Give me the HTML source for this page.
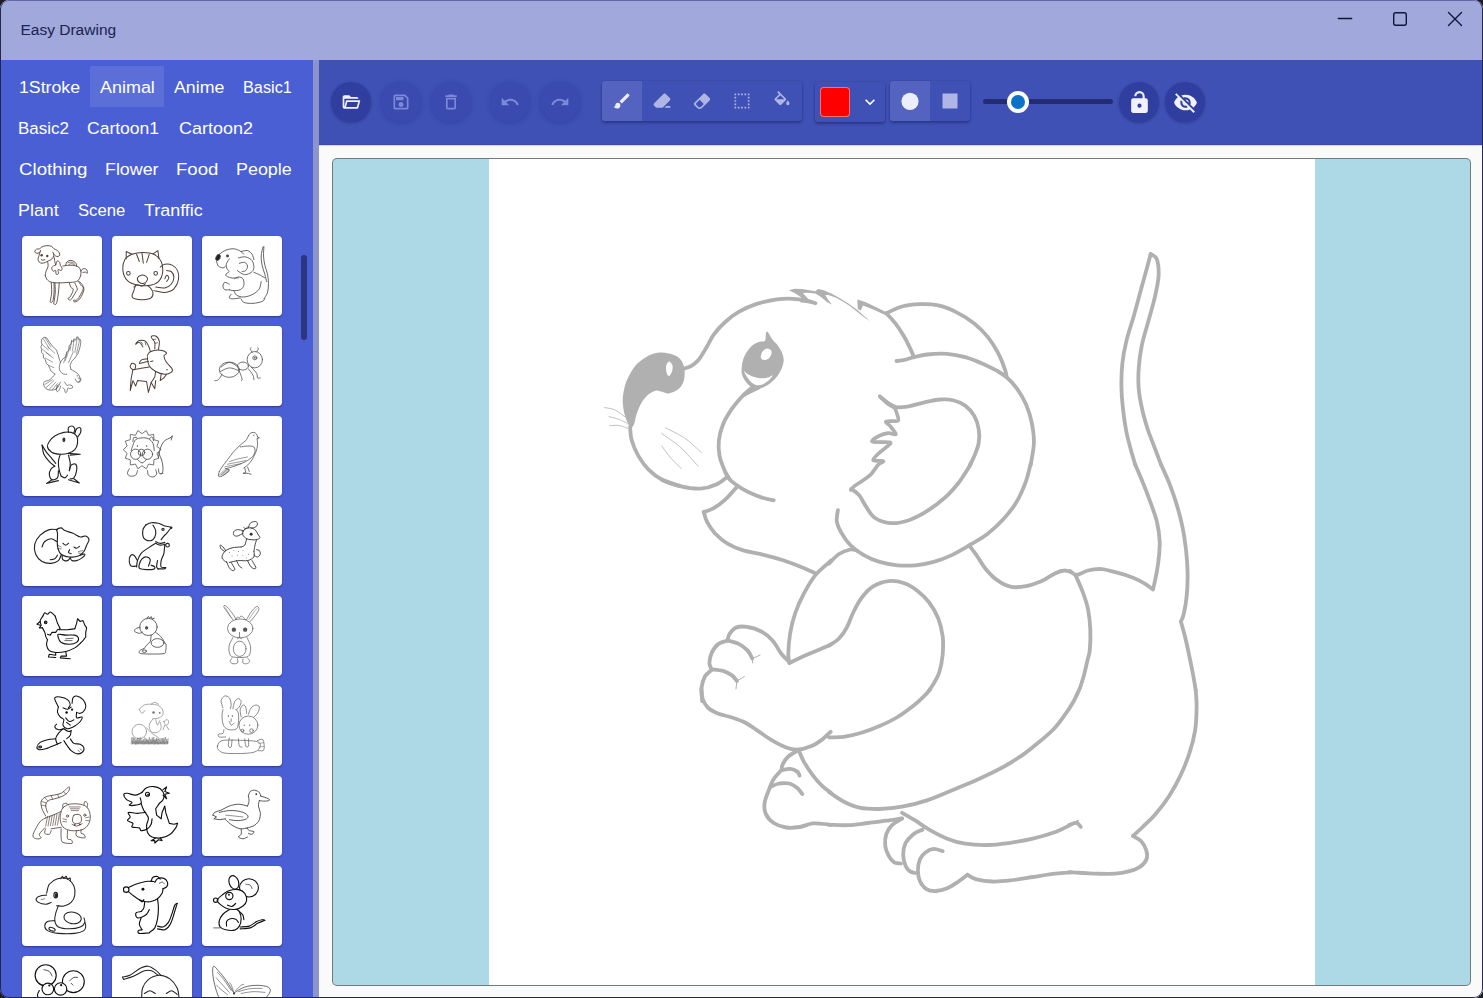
<!DOCTYPE html>
<html>
<head>
<meta charset="utf-8">
<title>Easy Drawing</title>
<style>
*{box-sizing:border-box;margin:0;padding:0}
html,body{width:1483px;height:998px;overflow:hidden;background:#1c1c24;font-family:"Liberation Sans",sans-serif}
#win{position:absolute;left:0;top:0;width:1483px;height:998px;overflow:hidden;border-radius:9px 9px 9px 9px;background:#a0a8dc}
#win .edge{position:absolute;left:0;top:0;right:0;bottom:0;border-radius:9px;border:1px solid #23264d;border-top-color:#6866ab;z-index:50;pointer-events:none}
.abs{position:absolute}
#title{left:0;top:0;width:1483px;height:60px;background:#a0a8dc}
#title .t{position:absolute;left:20px;top:20px;transform:translate(0.5px,0.5px);font-size:15.5px;line-height:18px;color:#1b2250;white-space:nowrap;transform-origin:0 50%}
#side{left:0;top:60px;width:313px;height:938px;background:#4a5fd4;overflow:hidden}
#split{left:313px;top:60px;width:6px;height:938px;background:#8b94cc}
#tool{left:319px;top:60px;width:1164px;height:85px;background:#3f51b5;box-shadow:0 1px 1px rgba(0,0,0,.12);border-bottom:1px solid #3a4aa8}
#work{left:319px;top:145px;width:1164px;height:853px;background:#fafafa}
#cont{left:332px;top:158px;width:1139px;height:828px;background:#add8e6;border:1px solid rgba(84,84,84,.7);border-radius:5px;overflow:hidden}
#paper{left:489px;top:159px;width:826px;height:826px;background:#fff}
.tab{position:absolute;height:41px;line-height:41px;font-size:17.4px;color:#fff;white-space:nowrap}
.tab span{display:inline-block;transform-origin:0 50%}
.sel{background:rgba(255,255,255,.10)}
.th{position:absolute;width:80px;height:80px;background:#fff;border-radius:4px;box-shadow:0 1px 2px rgba(0,0,60,.42);overflow:hidden}
.th svg{position:absolute;left:0;top:0;width:80px;height:80px;fill:none;stroke:#444;stroke-width:1.1;stroke-linecap:round;stroke-linejoin:round}
#sb{left:301px;top:255px;width:6px;height:85px;border-radius:3px;background:#2a367f}
.cb{position:absolute;width:40px;height:40px;border-radius:20px;background:#303f9f;box-shadow:0 1px 3px rgba(0,0,60,.28)}
.cb.dis{background:#3a4aae;box-shadow:0 1px 5px rgba(30,40,140,.35)}
.cb svg{position:absolute;left:10px;top:10.4px;width:20px;height:20px;fill:#f0f1fb}
.cb.dis svg{fill:#7e88d8}
.card{position:absolute;height:40px;background:#3f51b5;border-radius:3px;box-shadow:0 2px 3px rgba(0,0,50,.3),0 0 2px rgba(0,0,50,.2)}
.it{position:absolute;top:0;width:40px;height:40px}
.it.on{background:#5463c0}
.it svg{position:absolute;left:10px;top:10px;width:20px;height:20px;fill:#afb6e6}
.it.on svg{fill:#eceefa}
</style>
</head>
<body>
<div id="win">
<div id="title" class="abs"><div class="t">Easy Drawing</div>
<svg class="abs" style="left:1330px;top:5px" width="150" height="30" viewBox="0 0 150 30" fill="none" stroke="#10163a" stroke-width="1.4" stroke-linecap="round">
<path d="M8.3 13.5H21.7"/>
<rect x="63.7" y="7.7" width="12.6" height="12.6" rx="2"/>
<path d="M118.5 7.5L131.5 20.5M131.5 7.5L118.5 20.5"/>
</svg>
</div>
<div id="side" class="abs">
<div class="tab" style="left:18.66px;top:7px"><span style="transform:scaleX(1.0182)">1Stroke</span></div>
<div class="abs sel" style="left:90px;top:6px;width:74px;height:41px"></div>
<div class="tab" style="left:99.63px;top:7px"><span style="transform:scaleX(1.0319)">Animal</span></div>
<div class="tab" style="left:174.06px;top:7px"><span style="transform:scaleX(1.0205)">Anime</span></div>
<div class="tab" style="left:242.52px;top:7px"><span style="transform:scaleX(0.9355)">Basic1</span></div>
<div class="tab" style="left:18.36px;top:48px"><span style="transform:scaleX(0.9745)">Basic2</span></div>
<div class="tab" style="left:87.41px;top:48px"><span style="transform:scaleX(1.0076)">Cartoon1</span></div>
<div class="tab" style="left:179.38px;top:48px"><span style="transform:scaleX(1.0330)">Cartoon2</span></div>
<div class="tab" style="left:18.68px;top:89px"><span style="transform:scaleX(1.0737)">Clothing</span></div>
<div class="tab" style="left:104.58px;top:89px"><span style="transform:scaleX(1.0255)">Flower</span></div>
<div class="tab" style="left:176.21px;top:89px"><span style="transform:scaleX(1.0689)">Food</span></div>
<div class="tab" style="left:235.94px;top:89px"><span style="transform:scaleX(1.0299)">People</span></div>
<div class="tab" style="left:18.26px;top:130px"><span style="transform:scaleX(1.0284)">Plant</span></div>
<div class="tab" style="left:78.35px;top:130px"><span style="transform:scaleX(0.9580)">Scene</span></div>
<div class="tab" style="left:144.47px;top:130px"><span style="transform:scaleX(1.0305)">Tranffic</span></div>

<div class="th" style="left:22px;top:176px"><svg viewBox="0 0 998 998" style="stroke:#4e3f3a;stroke-width:11"><path d="M230,180 C229,183 230,194 225,200 C220,206 209,213 200,215 C191,217 177,214 170,210 C163,206 158,198 160,190 C162,182 170,170 180,165 C190,160 208,165 220,160 C232,155 235,142 250,135 C265,128 290,121 310,120 C330,119 355,123 370,130 C385,137 388,152 400,160 C412,168 429,172 440,180 C451,188 460,200 465,210 C470,220 472,232 470,240 C468,248 458,253 450,255 C442,257 429,255 420,250 C411,245 401,233 395,225 C389,217 387,204 385,200"/><path d="M225,200 C222,208 214,235 210,250 C206,265 199,278 200,290 C201,302 207,317 215,325 C223,333 238,339 250,340 C262,341 277,335 290,330 C303,325 317,317 330,310 C343,303 359,300 370,290 C381,280 391,261 395,250 C399,239 395,229 395,225"/><circle cx="245" cy="240" r="15" fill="#4e3f3a" stroke="none"/><circle cx="315" cy="250" r="15" fill="#4e3f3a" stroke="none"/><path d="M240,292 C243,294 252,302 260,302 C268,302 281,296 285,295"/><path d="M320,320 C321,330 328,360 325,380 C322,400 306,422 300,440 C294,458 292,482 290,490"/><path d="M400,260 C402,270 407,303 410,320 C413,337 418,353 420,360"/><path d="M420,360 C428,349 432,315 440,310 C448,305 463,320 470,330 C477,340 475,358 480,370 C485,382 498,390 500,400 C502,410 498,427 490,430 C482,433 456,413 450,420 C444,427 459,461 455,470 C451,479 431,482 425,475 C419,468 426,436 420,430 C414,424 398,445 390,440 C382,435 370,411 370,400 C370,389 382,382 390,375 C398,368 412,371 420,360Z"/><path d="M290,490 C293,498 298,526 310,540 C322,554 337,568 360,575 C383,582 417,584 450,585 C483,586 527,582 560,580 C593,578 627,579 650,575 C673,571 687,568 700,555 C713,542 724,519 730,500 C736,481 738,458 735,440 C732,422 722,402 710,390 C698,378 680,374 660,370 C640,366 615,364 590,365 C565,366 523,373 510,375"/><path d="M545,365 C548,358 551,335 560,325 C569,315 586,307 600,305 C614,303 632,308 645,315 C658,322 669,335 675,345 C681,355 679,370 680,375"/><path d="M575,335 C581,333 598,324 610,325 C622,326 643,338 650,340" stroke-width="8"/><path d="M585,355 C591,353 608,344 620,345 C632,346 649,358 655,360" stroke-width="8"/><path d="M735,440 C739,435 750,415 760,410 C770,405 786,405 795,410 C804,415 812,431 815,440 C818,449 819,463 815,465 C811,467 799,452 790,450 C781,448 765,454 760,455"/><path d="M365,580 C366,600 372,663 370,700 C368,737 358,780 355,800 C352,820 347,816 350,820 C353,824 368,830 375,825 C382,820 386,811 390,790 C394,769 398,734 400,700 C402,666 400,604 400,585"/><path d="M410,585 C411,604 417,661 415,700 C413,739 403,796 400,820 C397,844 391,840 395,845 C399,850 418,858 425,850 C432,842 435,825 440,800 C445,775 451,736 455,700 C459,664 463,604 465,585"/><path d="M590,585 C593,594 602,626 610,640 C618,654 642,650 640,670 C638,690 611,742 600,760 C589,778 578,769 575,775 C572,781 578,792 585,795 C592,798 601,806 615,790 C629,774 658,722 670,700 C682,678 692,678 690,660 C688,642 665,602 660,590"/><path d="M700,560 C707,570 729,604 740,620 C751,636 768,633 765,655 C762,677 734,726 720,750 C706,774 692,792 680,800 C668,808 650,797 645,800 C640,803 643,818 650,820 C657,822 672,823 685,815 C698,807 716,792 730,770 C744,748 765,705 770,680 C775,655 768,638 760,620 C752,602 727,578 720,570"/></svg></div>
<div class="th" style="left:112px;top:176px"><svg viewBox="0 0 439.4 439.4" style="stroke:#4e3f3a;stroke-width:5.5"><path d="M60,190 C58,171 62,145 70,130 C78,115 93,107 110,100 C127,93 150,90 170,90 C190,90 213,92 230,100 C247,108 262,123 270,140 C278,157 280,182 278,200 C276,218 268,238 255,250 C242,262 219,269 200,272 C181,275 159,274 140,270 C121,266 98,258 85,245 C72,232 62,209 60,190Z"/><path d="M78,125 L78,85 L110,100"/><path d="M225,98 L252,80 L258,125"/><path d="M135,100 L150,140"/><path d="M165,95 L172,150"/><path d="M205,100 L190,145"/><ellipse cx="90" cy="205" rx="10" ry="10"/><ellipse cx="240" cy="205" rx="10" ry="10"/><path d="M140,230 C142,223 152,217 160,215 C168,213 179,216 185,220 C191,224 197,233 195,240 C193,247 182,258 175,260 C168,262 156,260 150,255 C144,250 138,237 140,230Z"/><path d="M130,270 C128,275 123,290 120,300 C117,310 109,322 110,330 C111,338 115,342 125,345 C135,348 155,351 170,350 C185,349 206,347 215,340 C224,333 226,319 225,310 C224,301 215,291 210,285 C205,279 198,274 195,272"/><path d="M120,280 C123,278 132,269 140,268 C148,267 158,276 165,275 C172,274 182,264 185,262"/><path d="M230,300 C240,302 272,312 290,310 C308,308 328,302 340,290 C352,278 362,257 365,240 C368,223 366,203 360,190 C354,177 342,166 330,160 C318,154 301,153 290,155 C279,157 269,168 265,170"/><path d="M240,280 C248,281 276,288 290,285 C304,282 317,275 325,265 C333,255 340,237 340,225 C340,213 332,201 325,195 C318,189 304,191 300,190"/><path d="M290,235 C292,232 296,216 300,215 C304,214 312,224 312,230 C312,236 302,247 300,250"/></svg></div>
<div class="th" style="left:202px;top:176px"><svg viewBox="0 0 439.4 439.4" style="stroke:#444;stroke-width:4.5"><ellipse cx="88" cy="118" rx="11" ry="18" transform="rotate(25 88 118)" fill="#222"/><path d="M95,100 C101,96 118,83 130,78 C142,73 158,70 170,70 C182,70 195,75 205,80 C215,85 226,97 230,100"/><circle cx="140" cy="110" r="8" fill="#444" stroke="none"/><path d="M80,140 C82,144 84,159 90,165 C96,171 108,175 115,175 C122,175 128,167 130,165"/><path d="M150,125 C148,129 138,142 135,150 C132,158 133,168 135,175 C137,182 143,188 145,190"/><path d="M215,85 C221,84 240,78 250,80 C260,82 269,92 275,100 C281,108 283,125 285,130"/><path d="M200,120 C207,119 228,112 240,115 C252,118 268,125 275,135 C282,145 286,164 285,175 C284,186 278,194 270,200 C262,206 249,211 240,212 C231,213 222,209 215,205 C208,201 198,192 195,190"/><path d="M205,150 C210,149 228,142 235,145 C242,148 249,158 250,165 C251,172 245,185 240,190 C235,195 223,194 220,195"/><path d="M335,60 C333,68 326,93 325,110 C324,127 327,143 330,160 C333,177 341,195 345,210 C349,225 353,243 355,250"/><path d="M340,58 C340,67 337,93 338,110 C339,127 341,143 345,160 C349,177 357,193 360,210 C363,227 365,243 365,260 C365,277 364,296 360,310 C356,324 343,339 340,345"/><path d="M150,195 C147,198 128,209 130,215 C132,221 148,228 160,230 C172,232 193,230 200,230"/><path d="M180,235 C183,233 192,225 200,225 C208,225 220,228 225,235 C230,242 232,260 230,270 C228,280 220,290 210,295 C200,300 180,300 170,300 C160,300 153,296 150,295"/><path d="M150,265 C146,263 131,253 125,255 C119,257 115,268 115,275 C115,282 119,292 125,295 C131,298 146,295 150,295"/><path d="M175,300 C178,304 181,319 190,325 C199,331 215,336 230,335 C245,334 266,328 280,320 C294,312 308,302 315,290 C322,278 323,257 325,250"/><path d="M285,200 C291,202 310,210 320,215 C330,220 341,228 345,230"/><path d="M160,320 C158,323 148,336 150,340 C152,344 160,345 170,345 C180,345 203,341 210,340"/><path d="M215,345 C218,348 219,361 230,365 C241,369 263,371 280,370 C297,369 319,364 330,360 C341,356 342,348 345,345"/></svg></div>
<div class="th" style="left:22px;top:266px"><svg viewBox="0 0 998 998" style="stroke:#555;stroke-width:9"><path d="M410,600 L360,560 L330,490 L305,470 L290,420 L270,400 L265,350 L245,330 L245,290 L235,260 L250,230 L240,200 L245,170 L260,150 L285,140 L310,150 L340,200 L380,250 L430,300 L450,360 L470,430 L480,450"/><path d="M250,230 L330,300" stroke-width="7"/><path d="M255,290 L350,370" stroke-width="7"/><path d="M290,400 L380,450" stroke-width="7"/><path d="M330,490 L400,520" stroke-width="7"/><path d="M285,145 L360,260" stroke-width="7"/><path d="M265,160 L340,280" stroke-width="7"/><path d="M300,330 L390,400" stroke-width="7"/><path d="M320,260 L410,340" stroke-width="7"/><path d="M480,450 L520,400 L545,390 L560,320 L580,310 L590,240 L610,230 L620,180 L640,200 L650,160 L670,180 L680,140 L700,135 L705,170 L720,160 L735,190 L725,260 L700,340 L660,400 L620,440 L600,490 L610,540"/><path d="M620,185 L600,300" stroke-width="7"/><path d="M650,165 L630,310" stroke-width="7"/><path d="M690,145 L660,330" stroke-width="7"/><path d="M720,170 L680,350" stroke-width="7"/><path d="M560,330 L520,460" stroke-width="7"/><path d="M600,260 L540,430" stroke-width="7"/><path d="M640,320 L580,460" stroke-width="7"/><path d="M480,450 C478,462 465,500 465,520 C465,540 471,557 480,570 C489,583 507,595 520,600 C533,605 553,600 560,600"/><path d="M610,540 C618,545 645,560 660,570 C675,580 689,587 700,600 C711,613 722,635 725,650 C728,665 724,682 720,690 C716,698 707,700 700,700 C693,700 686,697 680,690 C674,683 668,665 665,660"/><circle cx="690" cy="622" r="8" fill="#555" stroke="none"/><path d="M700,650 C706,652 731,652 735,660 C739,668 731,688 725,695 C719,702 704,699 700,700"/><path d="M410,600 C405,607 393,627 380,640 C367,653 346,672 330,680 C314,688 295,683 285,690 C275,697 271,708 270,720 C269,732 273,748 280,760 C287,772 297,783 310,790 C323,797 342,800 360,800 C378,800 405,797 420,790 C435,783 440,775 450,760 C460,745 475,710 480,700"/><path d="M300,770 L400,680" stroke-width="7"/><path d="M340,790 L420,700" stroke-width="7"/><path d="M380,795 L440,720" stroke-width="7"/><path d="M285,730 L380,670" stroke-width="7"/><path d="M420,790 L455,730" stroke-width="7"/><path d="M440,740 C438,748 430,777 430,790 C430,803 433,820 440,820 C447,820 463,802 470,790 C477,778 478,757 480,750"/><path d="M530,700 C535,707 550,734 560,740 C570,746 579,734 590,735 C601,736 618,739 625,745 C632,751 634,764 630,770 C626,776 610,779 600,780 C590,781 577,768 570,775 C563,782 565,811 560,820 C555,829 545,835 540,830 C535,825 535,800 530,790 C525,780 513,773 510,770"/></svg></div>
<div class="th" style="left:112px;top:266px"><svg viewBox="0 0 439.4 439.4" style="stroke:#4e3f3a;stroke-width:5.5"><path d="M170,115 C167,111 157,92 150,90 C143,88 130,102 130,100 C130,98 141,82 150,80 C159,78 176,78 185,85 C194,92 201,111 205,120 C209,129 209,137 210,140"/><path d="M235,125 C235,119 238,101 235,90 C232,79 214,66 215,60 C216,54 232,51 240,55 C248,59 258,72 260,85 C262,98 256,122 255,130"/><path d="M160,88 L168,100" stroke-width="4"/><path d="M182,90 L186,104" stroke-width="4"/><path d="M226,75 L240,72" stroke-width="4"/><path d="M236,95 L250,92" stroke-width="4"/><path d="M200,150 C206,142 218,138 230,135 C242,132 263,132 275,135 C287,138 298,145 300,150 C302,155 285,157 285,165 C285,173 292,188 300,200 C308,212 326,226 330,235 C334,244 332,250 325,255 C318,260 304,266 290,265 C276,264 254,258 240,250 C226,242 212,232 205,220 C198,208 196,192 195,180 C194,168 194,158 200,150Z"/><path d="M195,180 C190,181 172,181 165,185 C158,189 148,202 150,205 C152,208 167,202 175,200 C183,198 196,196 200,195"/><path d="M212,195 L225,192"/><circle cx="302" cy="240" r="4" fill="#4e3f3a" stroke="none"/><path d="M270,265 L265,300 L285,285 L300,265"/><path d="M205,225 C196,227 165,232 150,235 C135,238 121,239 115,240"/><path d="M115,240 C112,238 101,231 100,225 C99,219 105,207 110,205 C115,203 128,209 130,215 C132,221 126,236 125,240"/><path d="M115,240 L105,290 L100,355 L115,300 L130,330 L140,300 L190,305 L200,365 L215,310 L235,280 L240,250"/><path d="M215,310 L235,345 L240,300"/></svg></div>
<div class="th" style="left:202px;top:266px"><svg viewBox="0 0 439.4 439.4" style="stroke:#555;stroke-width:4.5"><ellipse cx="290" cy="185" rx="42" ry="45"/><ellipse cx="290" cy="175" rx="11" ry="11"/><circle cx="290" cy="175" r="5" fill="#555" stroke="none"/><path d="M275,145 C273,142 266,129 265,125 C264,121 269,121 270,120"/><path d="M300,142 C302,139 309,129 310,125 C311,121 306,121 305,120"/><ellipse cx="225" cy="220" rx="30" ry="22"/><ellipse cx="150" cy="240" rx="55" ry="42"/><path d="M105,225 C112,221 135,200 150,200 C165,200 188,218 195,222"/><path d="M100,250 C108,247 133,231 150,230 C167,229 192,242 200,245"/><path d="M200,235 C203,244 218,279 220,290 C222,301 216,298 215,300"/><path d="M255,235 C259,241 275,260 280,270 C285,280 284,291 285,295"/><path d="M270,225 C275,231 294,250 300,260 C306,270 302,281 305,285 C308,289 318,285 320,285"/><path d="M110,265 C107,270 97,289 90,295 C83,301 73,299 70,300"/></svg></div>
<div class="th" style="left:22px;top:356px"><svg viewBox="0 0 439.4 439.4" style="stroke:#222;stroke-width:6.3"><path d="M140,170 C138,160 143,150 150,140 C157,130 167,118 180,110 C193,102 215,93 230,90 C245,87 258,87 270,90 C282,93 294,100 300,110 C306,120 307,138 305,150 C303,162 298,176 290,185 C282,194 268,201 255,205 C242,209 225,211 210,210 C195,209 177,207 165,200 C153,193 142,180 140,170Z"/><path d="M255,90 C255,86 252,71 255,65 C258,59 269,54 275,55 C281,56 288,64 290,70 C292,76 286,87 285,90"/><path d="M290,95 C292,91 295,75 300,70 C305,65 316,62 320,65 C324,68 324,82 322,90 C320,98 308,111 305,115"/><ellipse cx="230" cy="130" rx="5" ry="9"/><circle cx="230" cy="130" r="5" fill="#222" stroke="none"/><path d="M110,160 C112,168 113,195 120,210 C127,225 140,239 150,250 C160,261 175,271 180,275"/><path d="M110,160 C114,167 126,188 135,200 C144,212 157,225 165,235 C173,245 182,256 185,260"/><path d="M255,205 L320,210 L265,215"/><path d="M210,210 C208,217 201,235 200,250 C199,265 202,287 205,300 C208,313 213,325 215,330"/><path d="M255,215 C257,222 264,246 265,260 C266,274 261,293 260,300"/><path d="M180,275 C177,278 165,282 160,290 C155,298 149,310 150,320 C151,330 158,347 165,350 C172,353 189,348 195,340 C201,332 199,307 200,300"/><path d="M165,350 L135,370 L200,355"/><path d="M260,300 C262,295 264,276 270,270 C276,264 290,260 295,265 C300,270 302,288 300,300 C298,312 291,332 285,340 C279,348 268,344 265,345"/><path d="M285,345 L315,368 L255,350"/><path d="M215,330 C218,332 229,341 235,340 C241,339 248,328 250,325"/></svg></div>
<div class="th" style="left:112px;top:356px"><svg viewBox="0 0 439.4 439.4" style="stroke:#444;stroke-width:4.5"><path d="M268,185 L247,205 L257,232 L230,240 L229,269 L201,264 L188,290 L165,273 L142,290 L129,264 L101,269 L100,240 L73,232 L83,205 L62,185 L83,165 L73,138 L100,130 L101,101 L129,106 L142,80 L165,97 L188,80 L201,106 L229,101 L230,130 L257,138 L247,165Z" stroke-width="4"/><path d="M105,190 C107,185 111,170 115,160 C119,150 122,137 130,130 C138,123 153,121 165,120 C177,119 190,120 200,125 C210,130 220,139 225,150 C230,161 231,183 232,190"/><path d="M115,140 C116,137 115,124 118,120 C121,116 132,118 135,118"/><path d="M205,125 C208,123 216,113 220,115 C224,117 227,132 228,135"/><ellipse cx="130" cy="210" rx="28" ry="28"/><ellipse cx="195" cy="210" rx="28" ry="28"/><ellipse cx="162" cy="200" rx="18" ry="18"/><path d="M140,238 C144,241 157,258 165,258 C173,258 186,241 190,238"/><circle cx="140" cy="165" r="4" fill="#444" stroke="none"/><circle cx="190" cy="165" r="4" fill="#444" stroke="none"/><path d="M255,230 C257,222 260,195 265,180 C270,165 276,150 285,140 C294,130 314,123 320,120"/><path d="M320,120 L332,108 L325,132"/><path d="M255,200 C258,208 271,233 275,250 C279,267 281,288 280,300 C279,312 272,317 270,320"/><path d="M95,290 C93,294 84,308 85,315 C86,322 92,328 100,330 C108,332 123,330 130,325 C137,320 138,304 140,300"/><path d="M195,300 C196,304 195,319 200,325 C205,331 218,336 225,335 C232,334 242,327 245,320 C248,313 241,299 240,295"/><path d="M255,290 C256,294 256,311 260,315 C264,319 277,315 280,315"/></svg></div>
<div class="th" style="left:202px;top:356px"><svg viewBox="0 0 439.4 439.4" style="stroke:#444;stroke-width:4"><path d="M255,110 C257,108 260,98 265,95 C270,92 279,89 285,90 C291,91 297,96 300,100 C303,104 304,112 305,115"/><path d="M305,115 L315,120 L303,125"/><circle cx="285" cy="105" r="3.5" fill="#444" stroke="none"/><path d="M303,125 C303,131 306,148 305,160 C304,172 300,187 295,200 C290,213 282,228 275,240 C268,252 258,262 250,270 C242,278 233,282 230,285"/><path d="M255,110 C252,114 248,127 240,135 C232,143 221,150 210,160 C199,170 187,182 175,195 C163,208 151,226 140,240 C129,254 118,269 110,280 C102,291 98,301 95,305"/><path d="M210,170 C217,169 238,165 250,165 C262,165 278,164 285,170 C292,176 292,190 290,200 C288,210 280,221 270,230 C260,239 245,248 230,255 C215,262 197,269 180,275 C163,281 138,288 130,290"/><path d="M150,250 C158,248 183,239 200,235 C217,231 242,227 250,225" stroke-width="3"/><path d="M140,265 C148,263 173,258 190,255 C207,252 232,247 240,245" stroke-width="3"/><path d="M125,280 C132,278 155,273 170,270 C185,267 208,263 215,262" stroke-width="3"/><path d="M95,305 C94,309 88,326 90,330 C92,334 100,335 110,330 C120,325 147,307 150,300 C153,293 133,292 130,290"/><path d="M95,325 L125,295" stroke-width="3"/><path d="M103,325 L133,295" stroke-width="3"/><path d="M111,325 L141,295" stroke-width="3"/><path d="M119,325 L149,295" stroke-width="3"/><path d="M235,285 L240,310 L225,315 L255,315 L270,320"/><path d="M250,280 L260,305"/></svg></div>
<div class="th" style="left:22px;top:446px"><svg viewBox="0 0 439.4 439.4" style="stroke:#222;stroke-width:6.3"><path d="M195,130 C188,130 166,125 150,130 C134,135 113,147 100,160 C87,173 74,192 70,210 C66,228 68,249 75,265 C82,281 96,297 110,305 C124,313 145,316 160,315 C175,314 191,308 200,300 C209,292 212,275 215,270"/><path d="M110,225 C112,220 117,202 125,195 C133,188 149,180 160,180 C171,180 185,192 190,195"/><path d="M155,295 C159,294 173,294 180,290 C187,286 192,273 195,270"/><path d="M195,150 C194,135 187,135 190,130 C193,125 208,119 215,120 C222,121 224,130 235,135 C246,140 266,144 280,150 C294,156 308,168 320,170 C332,172 342,162 350,165 C358,168 367,177 368,185 C369,193 360,204 355,215 C350,226 348,240 340,250 C332,260 323,270 310,275 C297,280 276,282 260,280 C244,278 226,275 215,265 C204,255 198,239 195,220 C192,201 196,165 195,150Z"/><path d="M225,205 C228,207 235,215 240,215 C245,215 252,207 255,205"/><path d="M285,225 C288,226 295,232 300,232 C305,232 312,224 315,222"/><path d="M262,240 C261,242 254,251 255,255 C256,259 268,261 270,262"/><path d="M215,225 L195,215" stroke-width="3"/><path d="M215,235 L195,235" stroke-width="3"/><path d="M310,250 L335,245" stroke-width="3"/><path d="M310,258 L335,262" stroke-width="3"/><path d="M220,275 C221,278 220,291 225,295 C230,299 243,302 250,300 C257,298 262,288 265,285"/><path d="M265,285 C267,288 269,298 275,300 C281,302 291,302 300,300 C309,298 322,291 330,285 C338,279 347,268 345,265 C343,262 324,269 320,270"/></svg></div>
<div class="th" style="left:112px;top:446px"><svg viewBox="0 0 439.4 439.4" style="stroke:#222;stroke-width:6.3"><path d="M185,105 C190,103 203,94 215,92 C227,90 242,92 255,95 C268,98 279,107 290,110 C301,113 315,114 320,115"/><circle cx="325" cy="120" r="7" fill="#222" stroke="none"/><path d="M320,125 C317,129 306,143 300,150 C294,157 290,159 285,165 C280,171 272,182 270,185"/><ellipse cx="280" cy="128" rx="6" ry="6"/><path d="M185,105 C182,109 172,120 170,130 C168,140 168,156 170,165 C172,174 178,181 185,185 C192,189 207,192 215,190 C223,188 231,179 235,170 C239,161 242,146 240,135 C238,124 228,110 225,105"/><path d="M240,195 C244,197 257,204 265,205 C273,206 286,201 290,200"/><path d="M240,205 C244,207 257,214 265,215 C273,216 286,211 290,210"/><ellipse cx="305" cy="215" rx="10" ry="10"/><path d="M290,210 C289,218 288,245 285,260 C282,275 272,288 270,300 C268,312 266,329 270,335 C274,341 292,336 295,338 C298,340 292,344 285,345 C278,346 256,345 250,345"/><path d="M240,205 C233,209 213,221 200,230 C187,239 170,248 160,260 C150,272 144,288 140,300 C136,312 136,329 135,335"/><path d="M200,330 C202,324 212,303 210,295 C208,287 198,281 190,280 C182,279 172,283 165,290 C158,297 152,311 150,320 C148,329 142,340 155,345 C168,350 212,350 225,348 C238,346 237,339 235,335 C233,331 218,327 215,325"/><path d="M250,300 C249,306 244,328 245,335 C246,342 253,343 255,345"/><path d="M140,300 C137,295 127,274 120,270 C113,266 104,269 100,275 C96,281 94,296 95,305 C96,314 98,326 105,330 C112,334 130,330 135,330"/></svg></div>
<div class="th" style="left:202px;top:446px"><svg viewBox="0 0 439.4 439.4" style="stroke:#333;stroke-width:5"><path d="M225,140 C228,134 232,128 240,125 C248,122 261,118 270,120 C279,122 288,128 295,135 C302,142 306,153 310,160 C314,167 320,171 318,175 C316,179 308,183 300,185 C292,187 279,186 270,185 C261,184 252,184 245,180 C238,176 228,167 225,160 C222,153 222,146 225,140Z"/><path d="M225,150 C220,152 203,163 195,165 C187,167 178,164 175,160 C172,156 172,145 175,140 C178,135 187,131 195,130 C203,129 220,134 225,135"/><path d="M255,120 C257,116 259,101 265,95 C271,89 283,85 290,85 C297,85 304,90 305,95 C306,100 301,110 295,115 C289,120 274,121 270,122"/><path d="M230,118 C232,119 237,126 240,125 C243,124 248,117 250,115"/><circle cx="270" cy="155" r="8" fill="#333" stroke="none"/><path d="M300,185 C298,191 292,209 290,220 C288,231 286,245 285,250"/><path d="M245,180 C243,186 240,208 235,215 C230,222 218,223 215,225"/><path d="M215,225 C207,226 180,226 165,230 C150,234 134,241 125,250 C116,259 108,275 110,285 C112,295 131,306 135,310"/><path d="M150,310 C158,308 183,302 200,300 C217,298 236,303 250,300 C264,297 279,288 285,280 C291,272 285,255 285,250"/><path d="M125,250 C122,248 109,241 105,235 C101,229 98,217 100,215 C102,213 110,220 115,225 C120,230 128,242 130,245"/><path d="M135,305 C138,311 144,332 150,340 C156,348 165,354 170,355 C175,356 182,352 180,345 C178,338 163,316 160,310"/><path d="M190,300 C192,305 200,323 205,330 C210,337 218,338 220,340"/><path d="M250,300 C253,306 263,328 270,335 C277,342 286,345 290,345 C294,345 298,342 295,335 C292,328 278,306 275,300"/><path d="M285,270 C288,272 299,281 305,280 C311,279 318,271 320,265 C322,259 318,249 315,245 C312,241 302,241 300,240"/><circle cx="150" cy="255" r="2.5" fill="#333" stroke="none"/><circle cx="175" cy="245" r="2.5" fill="#333" stroke="none"/><circle cx="200" cy="250" r="2.5" fill="#333" stroke="none"/><circle cx="225" cy="245" r="2.5" fill="#333" stroke="none"/><circle cx="165" cy="275" r="2.5" fill="#333" stroke="none"/><circle cx="195" cy="270" r="2.5" fill="#333" stroke="none"/><circle cx="225" cy="270" r="2.5" fill="#333" stroke="none"/><circle cx="255" cy="265" r="2.5" fill="#333" stroke="none"/><circle cx="245" cy="285" r="2.5" fill="#333" stroke="none"/></svg></div>
<div class="th" style="left:22px;top:536px"><svg viewBox="0 0 439.4 439.4" style="stroke:#111;stroke-width:6"><path d="M115,110 C117,107 121,94 125,92 C129,90 135,101 140,100 C145,99 150,88 155,88 C160,88 166,94 170,98 C174,102 180,108 182,110"/><path d="M115,110 C112,114 102,127 100,135 C98,143 104,156 105,160"/><path d="M100,140 L82,155 L105,162 L95,175 L112,175"/><ellipse cx="130" cy="145" rx="7" ry="7"/><circle cx="130" cy="145" r="3" fill="#111" stroke="none"/><path d="M112,175 C114,179 122,192 125,200 C128,208 128,213 130,220 C132,227 138,237 140,240"/><path d="M182,110 L195,150 L210,180 L195,185 L185,200 L165,200 L155,215 L140,210"/><path d="M140,240 C139,245 133,260 135,270 C137,280 141,293 150,300 C159,307 175,309 190,310 C205,311 223,309 240,305 C257,301 277,292 290,285 C303,278 315,264 320,260"/><path d="M205,185 C212,185 236,186 250,185 C264,184 283,181 290,180"/><path d="M290,180 L300,150 L305,125 L320,140 L335,135 L345,160 L355,175 L350,200 L350,225 L335,245 L320,260"/><path d="M200,210 C207,208 225,214 240,215 C255,216 278,212 290,215 C302,218 308,223 310,230 C312,237 308,249 300,255 C292,261 274,265 260,265 C246,265 225,261 215,255 C205,249 202,238 200,230 C198,222 193,212 200,210Z"/><path d="M240,235 L280,232" stroke-width="3.5"/><path d="M235,245 L275,245" stroke-width="3.5"/><path d="M185,310 L185,325 L150,320 L145,335 L185,338"/><path d="M240,305 L245,330 L215,330 L210,340 L265,345"/></svg></div>
<div class="th" style="left:112px;top:536px"><svg viewBox="0 0 439.4 439.4" style="stroke:#444;stroke-width:4.5"><ellipse cx="200" cy="170" rx="48" ry="47"/><path d="M190,122 L200,112 L206,122 L216,113 L220,126 L232,122"/><path d="M155,172 C151,173 135,176 130,180 C125,184 122,191 125,195 C128,199 143,204 150,205 C157,206 164,199 167,198"/><ellipse cx="190" cy="175" rx="6" ry="9"/><circle cx="190" cy="175" r="6" fill="#444" stroke="none"/><path d="M215,215 C214,221 214,241 210,250 C206,259 196,263 190,270 C184,277 178,287 175,290"/><path d="M240,200 C245,204 261,214 270,225 C279,236 291,258 295,265"/><ellipse cx="250" cy="258" rx="35" ry="24"/><path d="M175,290 C172,291 164,292 160,295 C156,298 149,301 150,305 C151,309 143,315 165,317 C187,319 258,320 280,317 C302,314 292,308 295,300 C298,292 297,273 297,268"/><ellipse cx="178" cy="303" rx="12" ry="7"/></svg></div>
<div class="th" style="left:202px;top:536px"><svg viewBox="0 0 439.4 439.4" style="stroke:#555;stroke-width:3.8"><path d="M170,130 C165,123 148,102 140,90 C132,78 122,66 120,60 C118,54 122,51 127,53 C132,55 139,60 147,70 C155,80 170,100 177,110 C184,120 185,127 187,130"/><path d="M160,118 C156,112 143,89 138,80 C133,71 131,68 130,66" stroke-width="2.5"/><path d="M245,130 C248,124 258,106 265,95 C272,84 283,71 290,65 C297,59 301,56 305,58 C309,60 314,66 312,75 C310,84 298,99 290,110 C282,121 269,135 265,140"/><path d="M258,128 C262,121 278,98 285,88 C292,78 298,73 300,70" stroke-width="2.5"/><path d="M185,130 C187,128 192,117 195,115 C198,113 202,121 205,120 C208,119 211,110 215,110 C219,110 224,115 228,118 C232,121 238,128 240,130"/><ellipse cx="210" cy="178" rx="70" ry="52"/><circle cx="175" cy="185" r="12" fill="#555" stroke="none"/><circle cx="237" cy="185" r="12" fill="#555" stroke="none"/><path d="M206,200 L206,225"/><path d="M195,235 C197,234 202,228 206,228 C210,228 215,234 217,235"/><path d="M170,228 C167,235 153,256 150,270 C147,284 147,299 150,310 C153,321 154,331 170,335 C186,339 229,339 245,335 C261,331 262,321 265,310 C268,299 268,284 265,270 C262,256 250,235 247,228"/><ellipse cx="207" cy="290" rx="35" ry="42"/><path d="M165,340 C163,343 154,355 155,360 C156,365 163,371 170,372 C177,373 191,372 195,368 C199,364 195,349 195,345"/><path d="M225,345 C225,349 222,364 225,368 C228,372 239,373 245,372 C251,371 261,365 262,360 C263,355 252,343 250,340"/></svg></div>
<div class="th" style="left:22px;top:626px"><svg viewBox="0 0 439.4 439.4" style="stroke:#111;stroke-width:5.8"><path d="M200,115 C198,110 188,93 185,85 C182,77 176,69 180,65 C184,61 198,58 210,60 C222,62 241,68 250,75 C259,82 264,92 265,100 C266,108 257,117 255,120"/><path d="M275,95 C276,90 276,72 280,65 C284,58 291,53 300,55 C309,57 327,67 335,75 C343,83 348,96 350,105 C352,114 350,122 345,130 C340,138 328,148 320,150 C312,152 303,146 300,145"/><path d="M200,115 C199,120 193,136 195,145 C197,154 204,163 210,170 C216,177 228,178 230,185 C232,192 222,207 225,215 C228,223 239,234 250,235 C261,236 278,227 290,220 C302,213 313,203 320,195 C327,187 333,173 330,170 C327,167 305,179 300,175 C295,171 300,150 300,145"/><circle cx="245" cy="145" r="7" fill="#111" stroke="none"/><circle cx="275" cy="130" r="6" fill="#111" stroke="none"/><path d="M225,120 C229,121 242,129 250,128 C258,127 267,117 270,115"/><path d="M240,175 C243,178 252,193 260,195 C268,197 281,187 285,185"/><path d="M245,200 L265,215"/><path d="M190,210 C188,212 178,220 180,225 C182,230 192,238 200,240 C208,242 225,236 230,235"/><path d="M230,235 C234,238 248,248 255,250 C262,252 268,246 270,245"/><path d="M225,235 C221,239 207,251 200,260 C193,269 186,280 185,290 C184,300 193,315 195,320"/><path d="M270,245 C269,249 269,262 265,270 C261,278 248,287 245,290"/><path d="M185,290 C178,291 154,292 140,295 C126,298 110,303 100,310 C90,317 83,328 82,335 C81,342 87,348 95,350 C103,352 116,349 130,345 C144,341 166,331 180,325 C194,319 209,312 215,310"/><path d="M230,300 C233,305 243,321 250,330 C257,339 262,348 270,355 C278,362 290,370 300,372 C310,374 323,370 330,365 C337,360 342,348 340,340 C338,332 329,324 320,320 C311,316 294,320 285,315 C276,310 268,294 265,290"/><ellipse cx="100" cy="335" rx="8" ry="5"/><path d="M318,345 L328,352" stroke-width="3"/><path d="M308,352 L316,362" stroke-width="3"/></svg></div>
<div class="th" style="left:112px;top:626px"><svg viewBox="0 0 439.4 439.4" style="stroke:#777;stroke-width:3.5"><path d="M150,130 C154,126 164,110 175,105 C186,100 202,100 215,100 C228,100 240,101 250,105 C260,109 270,117 275,125 C280,133 282,147 280,155 C278,163 269,171 260,175 C251,179 231,179 225,180"/><path d="M150,130 C152,133 160,149 165,150 C170,151 178,138 180,135"/><path d="M215,100 C218,98 228,90 235,90 C242,90 252,98 255,100"/><circle cx="228" cy="145" r="7" fill="#777" stroke="none"/><circle cx="262" cy="148" r="5" fill="#777" stroke="none"/><path d="M225,180 C222,186 207,203 205,215 C203,227 208,243 215,250 C222,257 241,258 250,255 C259,252 268,239 270,230 C272,221 266,205 265,200"/><ellipse cx="150" cy="250" rx="40" ry="40"/><path d="M190,230 C195,235 208,250 220,260 C232,270 259,283 260,290 C261,297 231,298 225,300"/><path d="M240,185 C242,190 246,214 250,215 C254,216 260,194 262,190"/><path d="M285,195 C287,190 301,183 305,185 C309,187 312,200 310,205 C308,210 299,217 295,215 C291,213 283,200 285,195Z"/><path d="M290,215 L280,240"/><path d="M300,220 L312,240"/><path d="M105,316 L109,282 L113,317 L117,282 L121,315 L125,286 L129,321 L133,293 L137,320 L141,284 L145,318 L149,284 L153,316 L157,282 L161,316 L165,295 L169,320 L173,293 L177,320 L181,283 L185,317 L189,290 L193,319 L197,294 L201,320 L205,281 L209,319 L213,291 L217,318 L221,283 L225,318 L229,281 L233,321 L237,294 L241,318 L245,285 L249,320 L253,289 L257,320 L261,294 L265,318 L269,287 L273,319 L277,287 L281,316 L285,285 L289,320 L293,281 L297,315 L301,290 L305,317 L309,289" stroke-width="3"/><path d="M108,320 L111,303 L114,320 L117,301 L120,320 L123,308 L126,320 L129,300 L132,320 L135,302 L138,320 L141,300 L144,320 L147,304 L150,320 L153,301 L156,320 L159,302 L162,320 L165,305 L168,320 L171,301 L174,320 L177,304 L180,320 L183,307 L186,320 L189,299 L192,320 L195,299 L198,320 L201,300 L204,320 L207,306 L210,320 L213,304 L216,320 L219,300 L222,320 L225,301 L228,320 L231,300 L234,320 L237,303 L240,320 L243,298 L246,320 L249,305 L252,320 L255,307 L258,320 L261,308 L264,320 L267,305 L270,320 L273,308 L276,320 L279,298 L282,320 L285,301 L288,320 L291,308 L294,320 L297,306 L300,320 L303,302 L306,320 L309,307" stroke-width="2.5"/></svg></div>
<div class="th" style="left:202px;top:626px"><svg viewBox="0 0 439.4 439.4" style="stroke:#555;stroke-width:3.8"><path d="M115,120 C113,113 103,91 105,80 C107,69 118,58 125,55 C132,52 144,58 150,65 C156,72 159,90 160,100 C161,110 156,121 155,125"/><path d="M170,125 C172,118 175,94 180,85 C185,76 194,70 200,70 C206,70 214,78 215,85 C216,92 209,108 205,115 C201,122 192,128 190,130"/><path d="M115,130 C114,137 109,155 110,170 C111,185 113,208 120,220 C127,232 138,238 150,240 C162,242 182,242 190,235 C198,228 198,214 200,200 C202,186 202,162 200,150 C198,138 188,132 185,128"/><circle cx="145" cy="165" r="4" fill="#555" stroke="none"/><circle cx="167" cy="165" r="4" fill="#555" stroke="none"/><path d="M150,195 C152,198 156,213 160,215 C164,217 172,207 175,205"/><path d="M160,180 L160,195"/><path d="M215,170 C214,163 208,141 210,130 C212,119 220,108 225,105 C230,102 237,108 240,115 C243,122 244,144 245,150"/><path d="M255,155 C258,149 263,128 270,120 C277,112 288,106 295,105 C302,104 313,108 315,115 C317,122 310,141 305,150 C300,159 288,167 285,170"/><ellipse cx="255" cy="215" rx="52" ry="50"/><circle cx="232" cy="215" r="3.5" fill="#555" stroke="none"/><circle cx="262" cy="215" r="3.5" fill="#555" stroke="none"/><ellipse cx="272" cy="245" rx="10" ry="10"/><ellipse cx="222" cy="245" rx="8" ry="8"/><path d="M120,240 C119,243 120,256 115,260 C110,264 93,262 90,265 C87,268 88,278 95,280 C102,282 124,280 130,280"/><path d="M150,285 C149,292 143,322 145,330 C147,338 157,341 160,335 C163,329 164,302 165,295"/><path d="M200,290 C201,297 202,322 205,330 C208,338 218,334 220,335"/><path d="M235,290 C236,297 237,323 240,330 C243,337 252,337 255,330 C258,323 255,297 255,290"/><path d="M85,330 C88,321 91,305 110,300 C129,295 168,297 200,298 C232,299 280,300 300,305 C320,310 323,320 320,330 C317,340 310,358 280,365 C250,372 171,372 140,370 C109,368 104,362 95,355 C86,348 82,339 85,330Z"/><path d="M305,300 C310,299 329,287 335,295 C341,303 344,340 340,350 C336,360 315,354 310,355"/><path d="M312,315 L338,312" stroke-width="2.5"/><path d="M314,335 L340,332" stroke-width="2.5"/></svg></div>
<div class="th" style="left:22px;top:716px"><svg viewBox="0 0 439.4 439.4" style="stroke:#4e3f3a;stroke-width:4.5"><path d="M130,220 C127,213 114,193 110,180 C106,167 102,151 105,140 C108,129 118,121 130,115 C142,109 161,108 175,105 C189,102 203,101 215,95 C227,89 238,76 245,70 C252,64 258,58 260,60 C262,62 261,77 255,85 C249,93 238,103 225,110 C212,117 193,121 180,125 C167,129 153,129 145,135 C137,141 131,149 130,160 C129,171 138,193 140,200"/><path d="M108,160 L132,165" stroke-width="3.5"/><path d="M108,140 L134,148" stroke-width="3.5"/><path d="M125,118 L142,138" stroke-width="3.5"/><path d="M160,107 L168,128" stroke-width="3.5"/><path d="M195,100 L203,120" stroke-width="3.5"/><path d="M228,85 L240,100" stroke-width="3.5"/><path d="M225,175 C232,168 244,158 260,155 C276,152 303,152 320,155 C337,158 351,164 360,175 C369,186 374,205 375,220 C376,235 372,252 365,265 C358,278 346,289 330,295 C314,301 288,302 270,300 C252,298 235,290 225,280 C215,270 212,254 210,240 C208,226 212,206 215,195 C218,184 218,182 225,175Z"/><path d="M225,175 C225,172 222,159 225,155 C228,151 240,149 245,150 C250,151 253,158 255,160"/><path d="M340,160 C341,157 342,142 345,140 C348,138 358,145 360,150 C362,155 358,168 358,172"/><path d="M260,170 L320,170" stroke-width="3.5"/><path d="M265,180 L315,180" stroke-width="3.5"/><path d="M270,190 L310,190" stroke-width="3.5"/><path d="M285,215 C292,209 313,209 320,215 C327,221 328,242 325,250 C322,258 308,262 300,262 C292,262 280,258 278,250 C276,242 278,221 285,215Z"/><path d="M275,265 C279,267 291,276 300,275 C309,274 325,264 330,262"/><circle cx="290" cy="268" r="5" fill="#4e3f3a" stroke="none"/><circle cx="318" cy="266" r="5" fill="#4e3f3a" stroke="none"/><path d="M225,235 L245,240" stroke-width="3.5"/><path d="M225,250 L245,252" stroke-width="3.5"/><path d="M350,230 L368,225" stroke-width="3.5"/><path d="M350,245 L368,245" stroke-width="3.5"/><ellipse cx="250" cy="220" rx="6" ry="6"/><ellipse cx="345" cy="215" rx="6" ry="6"/><path d="M215,195 C208,198 184,209 170,215 C156,221 137,228 130,230"/><path d="M215,282 L160,290"/><path d="M140,222 L130,275" stroke-width="3.5"/><path d="M153,219 L143,274" stroke-width="3.5"/><path d="M166,216 L156,273" stroke-width="3.5"/><path d="M179,213 L169,272" stroke-width="3.5"/><path d="M192,210 L182,271" stroke-width="3.5"/><path d="M205,207 L195,270" stroke-width="3.5"/><path d="M130,230 C125,233 109,240 100,250 C91,260 82,277 75,290 C68,303 59,321 60,330 C61,339 72,343 80,345 C88,347 102,344 105,340 C108,336 92,329 95,320 C98,311 120,291 125,285"/><path d="M130,290 C129,294 122,310 125,315 C128,320 144,322 150,320 C156,318 158,303 160,300"/><path d="M215,290 C215,298 213,328 215,340 C217,352 215,360 225,365 C235,370 268,372 275,370 C282,368 274,354 270,350 C266,346 253,353 250,345 C247,337 250,308 250,300"/><path d="M300,300 C300,305 292,323 300,330 C308,337 338,342 345,340 C352,338 343,324 340,320 C337,316 328,319 325,315 C322,311 325,298 325,295"/></svg></div>
<div class="th" style="left:112px;top:716px"><svg viewBox="0 0 439.4 439.4" style="stroke:#111;stroke-width:6.3"><path d="M165,90 C169,86 179,70 190,65 C201,60 218,57 230,58 C242,59 256,63 265,70 C274,77 282,90 285,100 C288,110 284,122 280,130 C276,138 263,147 260,150"/><path d="M165,90 C159,92 143,104 130,105 C117,106 96,96 85,95 C74,94 66,94 65,100 C64,106 72,122 80,130 C88,138 108,140 110,145 C112,150 92,158 95,160 C98,162 119,162 130,160 C141,158 156,157 160,150 C164,143 156,125 155,120"/><ellipse cx="195" cy="100" rx="11" ry="11"/><circle cx="198" cy="103" r="5" fill="#111" stroke="none"/><path d="M280,75 L300,60 L290,85 L315,95 L290,100 L300,125 L280,105"/><path d="M160,150 C162,157 168,177 175,190 C182,203 198,217 200,230 C202,243 191,257 190,270 C189,283 190,299 195,310 C200,321 208,330 220,335 C232,340 253,342 270,340 C287,338 307,329 320,320 C333,311 343,295 350,285 C357,275 358,264 360,260"/><path d="M260,150 L240,180 L245,215 L270,235 L275,200 L290,165 L295,200 L305,230 L315,260 L340,265 L360,260"/><path d="M185,200 C178,201 156,205 140,205 C124,205 97,197 90,200 C83,203 101,218 100,225 C99,232 82,239 85,245 C88,251 111,254 115,260 C119,266 104,276 110,280 C116,284 142,282 150,285 C158,288 152,299 160,300 C168,301 186,296 195,290 C204,284 211,274 215,265 C219,256 219,240 220,235"/><path d="M240,340 L215,355 L235,355 L235,368 L255,350 L275,355 L265,340"/></svg></div>
<div class="th" style="left:202px;top:716px"><svg viewBox="0 0 439.4 439.4" style="stroke:#333;stroke-width:4.5"><path d="M255,110 C257,106 259,90 265,85 C271,80 282,77 290,78 C298,79 310,85 315,90 C320,95 321,107 322,110"/><path d="M322,110 C329,112 357,121 365,125 C373,129 372,133 368,135 C364,137 349,138 340,138 C331,138 319,136 315,135"/><circle cx="298" cy="100" r="5" fill="#333" stroke="none"/><path d="M255,110 C256,115 259,131 258,140 C257,149 251,161 250,165"/><path d="M315,135 C314,140 309,154 310,165 C311,176 319,188 320,200 C321,212 320,228 315,240 C310,252 301,262 290,270 C279,278 257,282 250,285"/><path d="M250,165 C242,163 217,155 200,155 C183,155 165,160 150,165 C135,170 123,179 110,185 C97,191 78,195 70,200 C62,205 62,212 60,215"/><path d="M60,215 L80,225 L65,235 L95,240 L130,235"/><path d="M95,200 C104,198 131,191 150,190 C169,189 193,191 210,195 C227,199 244,208 250,215 C256,222 253,230 245,235 C237,240 216,244 200,245 C184,246 158,241 150,240"/><path d="M130,215 C138,216 164,218 180,220 C196,222 218,224 225,225" stroke-width="3"/><path d="M130,240 C136,245 152,262 165,270 C178,278 196,288 210,290 C224,292 243,286 250,285"/><path d="M215,290 C215,295 218,312 215,320 C212,328 198,331 200,335 C202,339 217,345 225,345 C233,345 246,337 250,335"/><path d="M245,285 C248,288 253,297 260,300 C267,303 282,302 285,305 C288,308 280,318 275,320 C270,322 258,316 255,315"/></svg></div>
<div class="th" style="left:22px;top:806px"><svg viewBox="0 0 439.4 439.4" style="stroke:#222;stroke-width:5.8"><path d="M135,150 C138,142 140,113 150,100 C160,87 178,75 195,70 C212,65 235,65 250,72 C265,79 278,95 285,110 C292,125 292,145 290,160 C288,175 280,190 270,200 C260,210 243,217 230,220 C217,223 197,218 190,218"/><path d="M212,70 L222,56 L230,68 L243,56 L250,72 L265,66 L266,84"/><path d="M135,160 C129,161 110,162 100,165 C90,168 80,174 78,180 C76,186 81,195 90,200 C99,205 118,210 130,210 C142,210 155,202 160,200"/><path d="M105,185 L125,180" stroke-width="3"/><ellipse cx="185" cy="160" rx="10" ry="15"/><ellipse cx="187" cy="162" rx="5" ry="9" fill="#222"/><path d="M200,218 C198,225 188,246 185,260 C182,274 178,288 180,300 C182,312 187,328 200,335 C213,342 240,345 260,345 C280,345 306,341 320,335 C334,329 342,318 345,310 C348,302 341,289 340,285"/><ellipse cx="278" cy="285" rx="48" ry="32" transform="rotate(10 278 285)"/><path d="M180,300 C173,301 149,300 140,305 C131,310 125,322 125,330 C125,338 128,348 140,355 C152,362 175,368 200,370 C225,372 267,372 290,370 C313,368 330,362 340,355 C350,348 349,338 350,330 C351,322 346,313 345,310"/><ellipse cx="165" cy="347" rx="18" ry="9" transform="rotate(20 165 347)"/></svg></div>
<div class="th" style="left:112px;top:806px"><svg viewBox="0 0 439.4 439.4" style="stroke:#111;stroke-width:6.3"><ellipse cx="78" cy="130" rx="15" ry="15"/><path d="M90,118 C97,115 114,106 130,100 C146,94 168,88 185,85 C202,82 222,85 230,85"/><path d="M92,142 C97,146 110,158 120,165 C130,172 140,180 150,185 C160,190 169,193 180,195 C191,197 203,198 215,195 C227,192 240,188 250,180 C260,172 270,159 275,150 C280,141 279,129 280,125"/><path d="M215,82 C217,79 219,66 225,62 C231,58 243,56 250,58 C257,60 262,70 265,72"/><path d="M235,90 C238,87 242,74 250,70 C258,66 276,65 285,68 C294,71 302,82 305,90 C308,98 304,109 300,115 C296,121 283,123 280,125"/><path d="M260,95 C262,94 270,88 275,88 C280,88 286,96 288,98" stroke-width="3.5"/><circle cx="170" cy="128" r="8" fill="#111" stroke="none"/><path d="M150,185 C152,187 161,197 165,197 C169,197 173,187 175,185"/><path d="M180,195 C179,201 178,221 175,230 C172,239 162,247 160,250"/><path d="M160,250 C156,251 140,252 135,255 C130,258 129,265 130,270 C131,275 134,283 140,285 C146,287 157,283 165,280 C173,277 183,272 190,265 C197,258 202,244 205,240"/><path d="M250,180 C251,188 255,212 255,230 C255,248 253,272 250,290 C247,308 242,328 235,340 C228,352 210,361 205,365"/><path d="M160,285 C158,291 149,309 150,320 C151,331 162,345 165,350"/><path d="M165,350 C162,351 148,352 145,355 C142,358 140,368 150,370 C160,372 196,368 205,368"/><path d="M250,330 C255,331 270,338 280,335 C290,332 302,322 310,310 C318,298 324,276 330,260 C336,244 340,224 345,215 C350,206 356,207 358,205"/><path d="M250,345 C257,346 278,354 290,350 C302,346 312,334 320,320 C328,306 334,284 340,265 C346,246 355,215 358,205"/></svg></div>
<div class="th" style="left:202px;top:806px"><svg viewBox="0 0 439.4 439.4" style="stroke:#111;stroke-width:6.3"><ellipse cx="175" cy="90" rx="26" ry="38" transform="rotate(-20 175 90)"/><ellipse cx="258" cy="120" rx="52" ry="50"/><path d="M240,100 C244,101 259,101 265,105 C271,109 273,122 275,125" stroke-width="3.5"/><path d="M85,185 C89,179 99,168 110,160 C121,152 135,140 150,135 C165,130 186,128 200,130 C214,132 228,140 235,150 C242,160 247,178 245,190 C243,202 235,212 225,220 C215,228 199,236 185,238 C171,240 153,239 140,235 C127,231 114,222 105,215 C96,208 88,200 85,195 C82,190 81,191 85,185Z" fill="#fff"/><ellipse cx="75" cy="188" rx="12" ry="12"/><ellipse cx="150" cy="165" rx="20" ry="20"/><circle cx="148" cy="158" r="5" fill="#111" stroke="none"/><path d="M140,215 C144,216 158,224 165,222 C172,220 182,208 185,205"/><path d="M150,240 C144,244 124,255 115,265 C106,275 98,288 95,300 C92,312 94,327 100,335 C106,343 117,347 130,350 C143,353 168,355 180,352 C192,349 199,340 205,330 C211,320 215,303 215,290 C215,277 209,259 205,250 C201,241 192,240 190,238"/><path d="M205,250 C208,253 221,262 225,270 C229,278 229,291 230,295"/><path d="M135,330 C135,326 132,312 135,305 C138,298 147,292 155,290 C163,288 178,289 185,292 C192,295 198,307 200,310"/><path d="M210,335 C218,334 245,335 260,330 C275,325 288,311 300,305 C312,299 322,296 330,295 C338,294 342,298 345,298"/><path d="M210,345 C219,344 249,345 265,340 C281,335 292,322 305,315 C318,308 338,301 345,298"/><path d="M65,340 L100,340" stroke-width="3.5"/></svg></div>
<div class="th" style="left:22px;top:896px"><svg viewBox="0 0 439.4 439.4" style="stroke:#111;stroke-width:6.3"><ellipse cx="130" cy="106" rx="58" ry="58"/><ellipse cx="282" cy="141" rx="60" ry="60"/><path d="M120,75 C125,77 142,79 150,85 C158,91 162,106 165,110" stroke-width="4"/><path d="M262,135 C266,132 278,121 285,118 C292,115 302,118 305,118" stroke-width="4"/><path d="M270,150 L280,160" stroke-width="4"/><ellipse cx="142" cy="181" rx="32" ry="32" fill="#fff"/><ellipse cx="212" cy="181" rx="34" ry="34" fill="#fff"/><circle cx="150" cy="162" r="6" fill="#111" stroke="none"/><circle cx="215" cy="160" r="6" fill="#111" stroke="none"/><path d="M95,190 C93,194 85,207 85,215 C85,223 93,236 95,240"/></svg></div>
<div class="th" style="left:112px;top:896px"><svg viewBox="0 0 439.4 439.4" style="stroke:#222;stroke-width:5.8"><path d="M58,116 C65,114 81,114 98,106 C115,98 141,74 158,66 C175,58 185,54 198,56 C211,58 226,68 238,76 C250,84 263,101 268,106"/><path d="M63,128 C72,125 99,119 118,111 C137,103 161,86 178,81 C195,76 206,77 218,81 C230,85 247,102 253,106"/><path d="M58,116 L63,128"/><path d="M163,226 C164,218 162,192 168,176 C174,160 183,143 198,131 C213,119 238,107 258,106 C278,105 301,114 318,126 C335,138 350,159 358,176 C366,193 366,218 368,226"/><path d="M178,206 C183,204 198,191 208,191 C218,191 233,204 238,206"/><path d="M298,206 C303,204 318,190 328,191 C338,192 353,208 358,211"/></svg></div>
<div class="th" style="left:202px;top:896px"><svg viewBox="0 0 439.4 439.4" style="stroke:#333;stroke-width:4"><path d="M174,201 C167,190 147,155 134,136 C121,117 106,99 94,86 C82,73 70,54 64,56 C58,58 58,79 59,96 C60,113 65,138 69,156 C73,174 80,194 84,206 C88,218 92,227 94,231"/><path d="M160,190 C153,180 132,147 120,130 C108,113 91,97 85,90" stroke-width="3"/><path d="M150,200 C142,192 117,163 105,150 C93,137 82,125 78,120" stroke-width="3"/><path d="M140,212 C133,207 110,189 100,180 C90,171 83,163 80,160" stroke-width="3"/><path d="M179,201 C188,196 213,178 234,171 C255,164 282,161 304,161 C326,161 352,165 364,171 C376,177 376,187 374,196 C372,205 357,221 354,226"/><path d="M200,196 C210,193 238,183 260,180 C282,177 318,178 330,178" stroke-width="3"/><path d="M215,206 C226,204 258,197 280,196 C302,195 334,199 345,200" stroke-width="3"/><path d="M174,196 C172,189 163,164 159,156 C155,148 151,148 149,146" stroke-width="3"/><path d="M184,191 C189,186 206,167 214,161 C222,155 226,157 229,156" stroke-width="3"/><circle cx="176" cy="206" r="6" fill="#333" stroke="none"/></svg></div>

</div>
<div id="sb" class="abs"></div>
<div id="split" class="abs"></div>
<div id="work" class="abs"></div>
<div id="tool" class="abs">
<div class="cb" style="left:12px;top:21.5px"><svg viewBox="0 0 24 24"><path d="M6.1,10L4,18V8H21A2,2 0 0,0 19,6H12L10,4H4A2,2 0 0,0 2,6V18A2,2 0 0,0 4,20H19C19.9,20 20.7,19.4 20.9,18.5L23.2,10H6.1M19,18H6L7.6,12H20.6L19,18Z"/></svg></div>
<div class="cb dis" style="left:62px;top:21.5px"><svg viewBox="0 0 24 24"><path d="M17 3H5C3.89 3 3 3.9 3 5V19C3 20.1 3.89 21 5 21H19C20.1 21 21 20.1 21 19V7L17 3M19 19H5V5H16.17L19 7.83V19M12 12C10.34 12 9 13.34 9 15S10.34 18 12 18 15 16.66 15 15 13.66 12 12 12M6 6H15V10H6V6Z"/></svg></div>
<div class="cb dis" style="left:112px;top:21.5px"><svg viewBox="0 0 24 24"><path d="M6,19A2,2 0 0,0 8,21H16A2,2 0 0,0 18,19V7H6V19M8,9H16V19H8V9M15.5,4L14.5,3H9.5L8.5,4H5V6H19V4H15.5Z"/></svg></div>
<div class="cb dis" style="left:171px;top:21.5px"><svg viewBox="0 0 24 24"><path d="M12.5,8C9.85,8 7.45,9 5.6,10.6L2,7V16H11L7.38,12.38C8.77,11.22 10.54,10.5 12.5,10.5C16.04,10.5 19.05,12.81 20.1,16L22.47,15.22C21.08,11.03 17.15,8 12.5,8Z"/></svg></div>
<div class="cb dis" style="left:221px;top:21.5px"><svg viewBox="0 0 24 24"><path d="M18.4,10.6C16.55,9 14.15,8 11.5,8C6.85,8 2.92,11.03 1.54,15.22L3.9,16C4.95,12.81 7.95,10.5 11.5,10.5C13.45,10.5 15.23,11.22 16.62,12.38L13,16H22V7L18.4,10.6Z"/></svg></div>
<div class="card" style="left:283px;top:21px;width:200px">
<div class="it on" style="left:0;border-radius:3px 0 0 3px"><svg viewBox="0 0 24 24"><path d="M20.71,4.63L19.37,3.29C19,2.9 18.35,2.9 17.96,3.29L9,12.25L11.75,15L20.71,6.04C21.1,5.65 21.1,5 20.71,4.63M7,14A3,3 0 0,0 4,17C4,18.31 2.84,19 2,19C2.92,20.22 4.5,21 6,21A4,4 0 0,0 10,17A3,3 0 0,0 7,14Z"/></svg></div>
<div class="it" style="left:40px"><svg viewBox="0 0 24 24"><path d="M15.14,3C14.63,3 14.12,3.2 13.73,3.59L2.59,14.73C1.81,15.5 1.81,16.77 2.59,17.56L5.03,20H12.69L21.41,11.27C22.2,10.5 22.2,9.23 21.41,8.44L16.56,3.59C16.17,3.2 15.65,3 15.14,3M17,18L15,20H22V18"/></svg></div>
<div class="it" style="left:80px"><svg viewBox="0 0 24 24"><path d="M16.24,3.56L21.19,8.5C21.97,9.29 21.97,10.55 21.19,11.34L12,20.53C10.44,22.09 7.91,22.09 6.34,20.53L2.81,17C2.03,16.21 2.03,14.95 2.81,14.16L13.41,3.56C14.2,2.78 15.46,2.78 16.24,3.56M4.22,15.58L7.76,19.11C8.54,19.9 9.8,19.9 10.59,19.11L14.12,15.58L9.17,10.63L4.22,15.58Z"/></svg></div>
<div class="it" style="left:120px"><svg viewBox="0 0 24 24"><path d="M4,3H5V5H3V4A1,1 0 0,1 4,3M20,3A1,1 0 0,1 21,4V5H19V3H20M15,5V3H17V5H15M11,5V3H13V5H11M7,5V3H9V5H7M21,20A1,1 0 0,1 20,21H19V19H21V20M15,21V19H17V21H15M11,21V19H13V21H11M7,21V19H9V21H7M4,21A1,1 0 0,1 3,20V19H5V21H4M3,15H5V17H3V15M21,15V17H19V15H21M3,11H5V13H3V11M21,11V13H19V11H21M3,7H5V9H3V7M21,7V9H19V7H21Z"/></svg></div>
<div class="it" style="left:160px"><svg viewBox="0 0 24 24"><path d="M19,11.5C19,11.5 17,13.67 17,15A2,2 0 0,0 19,17A2,2 0 0,0 21,15C21,13.67 19,11.5 19,11.5M5.21,10L10,5.21L14.79,10M16.56,8.94L7.62,0L6.21,1.41L8.59,3.79L3.44,8.94C2.85,9.5 2.85,10.47 3.44,11.06L8.94,16.56C9.23,16.85 9.62,17 10,17C10.38,17 10.77,16.85 11.06,16.56L16.56,11.06C17.15,10.47 17.15,9.5 16.56,8.94Z"/></svg></div>
</div>
<div class="card" style="left:496px;top:21.5px;width:70px">
<div class="abs" style="left:5px;top:5px;width:30px;height:30px;border-radius:4px;background:#ff0000;border:1px solid rgba(255,200,200,.55)"></div>
<svg class="abs" style="left:45px;top:10px;width:20px;height:20px;fill:#fff" viewBox="0 0 24 24"><path d="M7.41,8.58L12,13.17L16.59,8.58L18,10L12,16L6,10L7.41,8.58Z"/></svg>
</div>
<div class="card" style="left:571px;top:21px;width:80px">
<div class="it on" style="left:0;border-radius:3px 0 0 3px"><svg viewBox="0 0 24 24"><circle cx="12" cy="12.4" r="10.3"/></svg></div>
<div class="it" style="left:40px"><svg viewBox="0 0 24 24"><path d="M3,3V21H21V3"/></svg></div>
</div>
<div class="abs" style="left:664px;top:39px;width:130px;height:5px;border-radius:2.5px;background:#232c72"></div>
<div class="abs" style="left:688.4px;top:31px;width:22px;height:22px;border-radius:11px;background:#fff"><div class="abs" style="left:4px;top:4px;width:14px;height:14px;border-radius:7px;background:#0b73c8"></div></div>
<div class="cb" style="left:800px;top:21.5px"><svg style="left:8px;top:8.4px;width:25px;height:25px" viewBox="0 0 24 24"><path d="M18,8A2,2 0 0,1 20,10V20A2,2 0 0,1 18,22H6C4.89,22 4,21.1 4,20V10A2,2 0 0,1 6,8H15V6A3,3 0 0,0 12,3A3,3 0 0,0 9,6H7A5,5 0 0,1 12,1A5,5 0 0,1 17,6V8H18M12,17A2,2 0 0,0 14,15A2,2 0 0,0 12,13A2,2 0 0,0 10,15A2,2 0 0,0 12,17Z"/></svg></div>
<div class="cb" style="left:846px;top:21.5px"><svg style="left:8px;top:8.4px;width:25px;height:25px" viewBox="0 0 24 24"><path d="M11.83,9L15,12.16C15,12.11 15,12.05 15,12A3,3 0 0,0 12,9C11.94,9 11.89,9 11.83,9M7.53,9.8L9.08,11.35C9.03,11.56 9,11.77 9,12A3,3 0 0,0 12,15C12.22,15 12.44,14.97 12.65,14.92L14.2,16.47C13.53,16.8 12.79,17 12,17A5,5 0 0,1 7,12C7,11.21 7.2,10.47 7.53,9.8M2,4.27L4.28,6.55L4.73,7C3.08,8.3 1.78,10 1,12C2.73,16.39 7,19.5 12,19.5C13.55,19.5 15.03,19.2 16.38,18.66L16.81,19.08L19.73,22L21,20.73L3.27,3M12,7A5,5 0 0,1 17,12C17,12.64 16.87,13.26 16.64,13.82L19.57,16.75C21.07,15.5 22.27,13.86 23,12C21.27,7.61 17,4.5 12,4.5C10.6,4.5 9.26,4.75 8,5.2L10.17,7.35C10.74,7.13 11.35,7 12,7Z"/></svg></div>

</div>
<div id="cont" class="abs"></div>
<div id="paper" class="abs">
<svg class="abs" style="left:-489px;top:-159px" width="1483" height="998" viewBox="0 0 1483 998" fill="none" stroke="#b0b0b0" stroke-linecap="round" stroke-linejoin="round">
<path d="M623.8,390.7 C624.6,386.9 625.3,383.6 627.2,379.4 C629.1,375.3 631.9,369.7 635.1,365.9 C638.3,362.2 642.6,359.1 646.3,356.9 C650.1,354.7 653.8,353.4 657.6,352.8 C661.4,352.3 665.5,352.8 668.9,353.5 C672.3,354.2 675.6,355.4 677.9,356.9 C680.1,358.4 681.3,360.3 682.4,362.5 C683.5,364.8 684.5,367.2 684.6,370.4 C684.8,373.6 684.6,378.5 683.5,381.7 C682.4,384.9 680.3,387.6 677.9,389.6 C675.4,391.5 671.5,393.0 668.9,393.4 C666.2,393.8 664.4,392.3 662.1,391.8 C659.9,391.4 657.8,390.1 655.4,390.7 C652.9,391.3 649.9,393.0 647.5,395.2 C645.0,397.5 642.6,400.8 640.7,404.2 C638.8,407.6 637.3,412.1 636.2,415.5 C635.1,418.9 635.0,422.6 633.9,424.5 C632.9,426.5 631.6,428.7 630.1,427.2 C628.6,425.7 626.2,419.7 624.9,415.5 C623.7,411.3 622.9,406.1 622.7,402.0 C622.5,397.8 623.1,394.5 623.8,390.7Z" fill="#b0b0b0" stroke="none"/>
<path d="M669.3,361.4 C670.4,361.4 672.0,363.8 672.5,365.5 C672.9,367.2 672.6,369.8 672.0,371.5 C671.4,373.3 669.8,375.9 668.9,376.1 C668.0,376.2 667.1,374.4 666.6,372.7 C666.2,370.9 665.7,367.3 666.2,365.5 C666.6,363.6 668.3,361.4 669.3,361.4Z" fill="#fff" stroke="none"/>
<path d="M684.2,368.6 C685.4,368.2 689.1,367.3 691.4,365.9 C693.7,364.5 695.9,362.9 698.2,360.3 C700.4,357.7 702.3,354.5 704.9,350.1 C707.6,345.8 710.6,339.1 713.9,334.4 C717.3,329.7 721.1,325.7 725.2,322.0 C729.3,318.2 733.5,314.8 738.7,311.8 C744.0,308.8 750.4,306.0 756.8,303.9 C763.1,301.9 771.0,300.3 777.0,299.4 C783.1,298.6 787.9,298.6 792.8,298.8 C797.7,298.9 802.6,299.8 806.3,300.6 C810.1,301.3 813.8,302.8 815.4,303.3" stroke-width="3.8"/>
<path d="M741.6,369.9 C741.7,367.8 741.9,364.3 742.6,361.5 C743.4,358.7 744.6,355.6 746.1,353.1 C747.7,350.5 749.8,347.9 751.7,346.0 C753.7,344.2 755.9,343.0 758.1,342.2 C760.2,341.3 763.5,341.9 764.7,341.0 C766.0,340.1 765.4,338.3 765.6,336.9 C765.9,335.5 765.8,333.6 766.1,332.7 C766.4,331.8 766.9,331.2 767.5,331.7 C768.2,332.1 769.1,334.1 770.0,335.5 C770.9,336.9 771.5,338.4 772.8,340.1 C774.1,341.7 776.2,343.3 777.7,345.3 C779.2,347.4 780.9,349.9 781.9,352.4 C782.9,354.8 783.6,357.6 783.7,360.1 C783.7,362.5 783.0,364.9 782.3,367.1 C781.5,369.3 780.3,371.4 779.1,373.4 C777.9,375.4 776.5,377.3 774.9,379.0 C773.3,380.8 771.3,382.5 769.3,383.9 C767.3,385.3 764.8,386.6 763.0,387.4 C761.1,388.2 759.7,388.7 758.1,388.8 C756.4,388.9 754.8,388.8 753.1,388.1 C751.5,387.4 749.8,386.1 748.2,384.6 C746.7,383.1 745.1,380.8 744.0,379.0 C743.0,377.3 742.3,375.6 741.9,374.1 C741.5,372.6 741.5,372.0 741.6,369.9Z" fill="#b0b0b0" stroke="none"/>
<path d="M744.0,371.3 C743.8,371.5 745.2,374.0 746.1,375.5 C747.1,377.0 748.4,379.0 749.6,380.4 C750.9,381.8 752.4,383.1 753.8,383.9 C755.3,384.7 756.5,385.3 758.1,385.3 C759.6,385.4 761.3,385.0 763.0,384.3 C764.6,383.6 766.5,382.2 767.9,381.1 C769.3,380.0 770.6,378.6 771.4,377.6 C772.2,376.6 773.1,375.3 772.8,375.2 C772.4,375.0 770.8,376.4 769.3,376.9 C767.8,377.4 765.5,378.1 763.7,378.3 C761.8,378.5 759.9,378.2 758.1,378.0 C756.2,377.7 754.2,377.2 752.4,376.6 C750.7,375.9 748.9,375.0 747.5,374.1 C746.1,373.2 744.3,371.1 744.0,371.3Z" fill="#fff" stroke="none"/>
<path d="M760.9,355.9 C761.1,354.5 761.9,352.2 763.0,351.0 C764.0,349.7 765.8,348.6 767.2,348.5 C768.5,348.4 770.3,349.4 771.0,350.3 C771.7,351.1 771.7,352.5 771.4,353.8 C771.1,355.0 770.3,356.9 769.3,358.0 C768.2,359.0 766.4,359.9 765.1,360.1 C763.8,360.2 762.3,359.7 761.6,359.0 C760.9,358.3 760.6,357.2 760.9,355.9Z" fill="#fff" stroke="none"/>
<path d="M758.1,388.1 C757.2,388.5 754.8,389.5 753.1,390.2 C751.5,391.0 749.9,391.6 748.2,392.5 C746.6,393.4 744.1,395.0 743.3,395.5" stroke-width="3.8"/>
<path d="M752.7,386.9 C751.1,388.3 746.7,391.6 743.2,395.2 C739.8,398.9 735.4,403.8 732.0,408.7 C728.6,413.6 725.1,419.2 723.0,424.5 C720.8,429.8 719.5,435.0 718.9,440.3 C718.3,445.5 718.5,450.8 719.6,456.1 C720.6,461.3 723.6,468.0 725.2,471.8 C726.8,475.7 728.6,477.8 729.3,479.0" stroke-width="3.8"/>
<path d="M630.1,426.8 C630.4,429.0 630.3,435.4 631.7,440.3 C633.1,445.2 635.6,451.2 638.5,456.1 C641.3,460.9 644.6,465.6 648.6,469.6 C652.5,473.5 656.9,477.0 662.1,479.7 C667.4,482.5 677.1,485.0 680.1,486.0" stroke-width="3.8"/>
<path d="M604.6,407.6 C606.3,408.0 611.2,408.2 614.8,409.9 C618.4,411.5 624.2,416.4 626.1,417.7" stroke-width="1.0" stroke="#c2c2c2"/>
<path d="M609.2,416.6 C610.8,417.1 616.3,418.4 619.3,419.5 C622.3,420.7 625.9,422.7 627.2,423.4" stroke-width="1.0" stroke="#c2c2c2"/>
<path d="M609.8,425.6 C611.4,425.6 616.2,425.1 619.3,425.6 C622.4,426.1 626.8,428.1 628.3,428.6" stroke-width="1.0" stroke="#c2c2c2"/>
<path d="M665.5,427.9 C668.7,429.6 678.6,433.9 684.6,438.0 C690.7,442.2 698.7,450.2 701.5,452.7" stroke-width="1.0" stroke="#c2c2c2"/>
<path d="M661.7,433.5 C664.7,435.8 674.1,441.6 680.1,447.0 C686.2,452.5 695.2,463.0 698.2,466.2" stroke-width="1.0" stroke="#c2c2c2"/>
<path d="M661.7,445.9 C663.2,448.0 667.9,454.6 671.1,458.3 C674.4,462.1 679.6,466.8 681.3,468.5" stroke-width="1.0" stroke="#c2c2c2"/>
<path d="M788.9,290.3 L794.5,288.7 L802.1,288.9 L809.6,290.3 L815.3,291.2 L818.1,288.9 L823.8,290.3 L831.4,293.6 L839.9,298.3 L848.4,303.5 L856.8,309.6 L864.4,316.3 L870.3,321.6 L864.4,317.4 L856.8,311.5 L850.2,306.3 L843.6,302.1 L836.1,297.8 L828.5,295.0 L825.2,295.0 L828.5,300.2 L832.0,304.6 L827.6,302.6 L821.0,296.9 L815.3,293.6 L807.8,292.7 L802.9,293.1 L806.8,297.4 L814.0,304.0 L807.8,303.2 L800.0,302.3 L801.2,297.4 L796.4,294.1Z" fill="#b0b0b0" stroke="none"/>
<path d="M857.3,299.5 L865.3,301.9 L874.8,306.6 L887.5,312.7 L886.3,315.5 L873.8,309.8 L863.0,305.6 L860.8,310.4 L857.8,308.9Z" fill="#b0b0b0" stroke="none"/>
<path d="M886.3,313.2 C889.0,312.1 896.5,308.0 902.1,306.5 C907.7,305.0 914.1,304.4 920.1,304.2 C926.2,304.0 932.2,304.0 938.2,305.4 C944.2,306.7 950.2,309.1 956.2,312.1 C962.2,315.1 969.0,319.2 974.2,323.4 C979.5,327.5 983.8,332.0 987.7,336.9 C991.7,341.8 995.1,347.4 997.9,352.7 C1000.7,357.9 1003.2,364.6 1004.6,368.5 C1006.1,372.3 1006.2,374.5 1006.5,375.7" stroke-width="3.8"/>
<path d="M886.3,313.2 C887.8,314.9 892.3,319.4 895.4,323.4 C898.4,327.3 901.7,332.4 904.4,336.9 C907.0,341.4 909.5,347.0 911.1,350.4 C912.7,353.8 913.4,356.1 913.8,357.2" stroke-width="3.8"/>
<path d="M896.5,361.0 C897.8,360.8 901.5,360.5 904.4,359.9 C907.3,359.2 910.1,358.1 913.8,357.2 C917.6,356.3 921.3,355.0 926.9,354.5 C932.5,353.9 940.8,353.4 947.2,353.8 C953.6,354.3 959.2,355.5 965.2,357.2 C971.2,358.9 978.0,361.7 983.2,363.9 C988.5,366.2 992.8,368.5 996.8,370.7 C1000.7,373.0 1003.5,374.5 1006.9,377.5 C1010.3,380.5 1013.8,384.2 1017.0,388.7 C1020.2,393.2 1023.6,398.9 1026.1,404.5 C1028.5,410.1 1030.4,416.2 1031.7,422.5 C1033.0,428.9 1034.1,435.7 1033.9,442.8 C1033.8,450.0 1031.1,461.6 1030.6,465.4" stroke-width="3.8"/>
<path d="M880.0,396.6 C881.3,397.7 884.9,401.6 887.5,403.4 C890.0,405.1 891.8,406.7 895.4,407.2 C898.9,407.7 904.0,407.1 908.9,406.3 C913.8,405.5 919.4,403.4 924.6,402.3 C929.9,401.1 935.5,399.8 940.4,399.5 C945.3,399.2 949.8,399.4 953.9,400.5 C958.1,401.5 961.8,403.1 965.2,405.6 C968.6,408.2 972.0,411.8 974.2,415.8 C976.5,419.7 978.0,424.8 978.7,429.3 C979.5,433.8 979.5,438.3 978.7,442.8 C978.0,447.3 975.7,452.6 974.2,456.3 C972.7,460.1 970.5,463.8 969.7,465.4" stroke-width="3.8"/>
<path d="M879.7,396.4 C881.1,397.5 885.7,401.2 888.1,403.0 C890.5,404.8 892.7,405.6 894.1,407.3 C895.6,409.0 896.1,411.1 896.8,413.3 C897.5,415.5 899.0,419.2 898.3,420.5 C897.7,421.8 895.0,420.9 892.9,421.1 C890.8,421.3 886.1,420.8 885.7,421.7 C885.3,422.6 888.8,424.4 890.5,426.5 C892.2,428.6 896.3,433.2 895.9,434.3 C895.5,435.4 891.0,432.8 888.1,433.1 C885.2,433.4 881.2,434.7 878.5,436.1 C875.8,437.5 871.7,440.5 871.9,441.5 C872.1,442.5 876.6,441.9 879.7,442.1 C882.8,442.3 889.5,441.8 890.5,442.7 C891.5,443.6 887.7,445.8 885.7,447.6 C883.7,449.4 880.6,451.5 878.5,453.6 C876.4,455.7 872.9,459.0 873.1,460.2 C873.3,461.4 878.0,460.6 879.7,460.8 C881.4,461.0 883.7,460.9 883.5,461.5 C883.3,462.1 879.9,463.1 878.5,464.4 C877.1,465.7 876.3,467.4 874.9,469.2 C873.5,471.0 872.3,473.2 870.1,475.2 C867.9,477.2 864.3,479.4 861.7,481.2 C859.0,483.0 856.2,484.6 854.4,486.1 C852.6,487.5 851.4,489.3 850.8,489.9" stroke-width="3.6"/>
<path d="M879.1,395.6 L888.1,401.2 L896.5,405.5 L892.9,409.1 L886.3,404.2Z" fill="#b0b0b0" stroke="none"/>
<path d="M1150.7,254.0 C1150.0,256.5 1148.2,263.4 1146.6,269.3 C1145.0,275.2 1143.1,282.1 1141.0,289.6 C1138.9,297.1 1136.7,305.7 1134.2,314.4 C1131.8,323.0 1128.3,333.1 1126.3,341.4 C1124.3,349.7 1123.1,356.4 1122.3,363.9 C1121.5,371.5 1121.3,379.0 1121.4,386.5 C1121.5,394.0 1122.1,401.5 1123.0,409.0 C1123.8,416.5 1125.0,424.8 1126.3,431.5 C1127.7,438.3 1129.3,443.9 1130.8,449.6 C1132.3,455.2 1134.6,462.7 1135.4,465.4" stroke-width="3.8"/>
<path d="M1150.7,254.0 C1151.7,254.8 1155.4,255.5 1156.8,259.2 C1158.1,262.8 1158.9,269.5 1158.6,276.1 C1158.2,282.6 1156.3,290.7 1154.5,298.6 C1152.7,306.5 1149.9,315.5 1147.7,323.4 C1145.6,331.3 1143.2,338.4 1141.7,345.9 C1140.2,353.4 1139.2,361.3 1138.7,368.5 C1138.2,375.6 1138.2,382.0 1138.7,388.7 C1139.3,395.5 1140.6,402.3 1142.1,409.0 C1143.6,415.8 1145.7,422.9 1147.7,429.3 C1149.8,435.7 1152.3,441.3 1154.5,447.3 C1156.8,453.3 1160.1,462.3 1161.3,465.4" stroke-width="3.8"/>
<path d="M662.1,480.0 C665.1,481.1 673.8,484.7 680.1,486.1 C686.5,487.6 694.4,488.9 700.4,488.6 C706.4,488.3 711.6,486.6 716.2,484.5 C720.8,482.5 726.0,477.8 727.9,476.4" stroke-width="3.8"/>
<path d="M725.2,471.9 C725.9,473.1 727.6,476.8 729.3,478.9 C731.0,481.0 732.3,482.2 735.4,484.3 C738.4,486.5 743.4,489.6 747.7,491.8 C752.1,493.9 756.9,496.0 761.3,497.4 C765.6,498.8 771.6,499.8 773.7,500.3" stroke-width="3.8"/>
<path d="M737.6,486.1 C735.5,488.4 729.3,495.9 725.2,499.6 C721.1,503.4 716.4,506.6 712.8,508.7 C709.2,510.7 705.3,511.5 703.8,512.0" stroke-width="3.8"/>
<path d="M703.8,512.0 C704.4,513.7 705.3,518.6 707.2,522.2 C709.1,525.8 711.7,529.9 715.1,533.5 C718.5,537.0 722.8,540.8 727.5,543.6 C732.2,546.4 737.2,548.5 743.2,550.4 C749.2,552.2 756.8,553.2 763.5,554.9 C770.3,556.5 777.4,558.4 783.8,560.5 C790.2,562.6 796.6,565.1 801.8,567.3 C807.1,569.4 813.1,572.3 815.4,573.3" stroke-width="3.8"/>
<path d="M831.1,560.5 C828.5,562.9 819.9,569.7 815.4,575.1 C810.8,580.6 807.5,586.8 804.1,593.2 C800.7,599.6 797.4,606.7 795.1,613.5 C792.7,620.2 791.2,627.0 790.1,633.7 C789.0,640.5 788.4,649.1 788.3,654.0 C788.2,658.9 789.2,661.5 789.4,663.0" stroke-width="3.8"/>
<path d="M789.4,663.0 C792.3,661.7 799.4,658.2 806.3,655.1 C813.3,652.1 827.0,646.3 831.1,644.5" stroke-width="3.8"/>
<path d="M789.4,661.9 C788.1,660.6 784.4,657.6 781.5,654.0 C778.7,650.4 775.9,644.2 772.5,640.5 C769.2,636.7 765.4,633.7 761.3,631.5 C757.1,629.2 751.9,627.6 747.7,627.0 C743.6,626.3 739.5,626.3 736.5,627.4 C733.5,628.5 731.2,631.6 729.7,633.7 C728.2,635.9 727.8,639.4 727.5,640.5" stroke-width="3.8"/>
<path d="M727.5,640.5 C726.0,641.1 721.1,641.8 718.5,643.9 C715.8,645.9 713.2,649.7 711.7,652.9 C710.2,656.1 709.4,660.2 709.4,663.0 C709.4,665.8 711.3,668.7 711.7,669.8" stroke-width="3.8"/>
<path d="M727.5,640.5 C729.3,641.1 735.4,642.2 738.7,643.9 C742.1,645.6 745.5,648.2 747.7,650.6 C750.0,653.1 751.5,657.2 752.3,658.5" stroke-width="3.8"/>
<path d="M752.3,658.5 L760.1,655.1" stroke-width="1"/>
<path d="M752.3,658.5 L752.7,663.0" stroke-width="1"/>
<path d="M711.7,669.8 C710.6,670.9 706.6,673.5 704.9,676.5 C703.2,679.6 702.0,683.7 701.5,687.8 C701.1,691.9 702.1,699.1 702.2,701.3" stroke-width="3.8"/>
<path d="M711.7,669.3 C713.6,669.6 719.6,669.9 723.0,670.9 C726.3,671.9 729.6,673.7 732.0,675.4 C734.3,677.1 736.1,680.1 736.9,681.1" stroke-width="3.8"/>
<path d="M736.9,681.1 L744.4,676.5" stroke-width="1"/>
<path d="M736.9,681.1 L736.0,688.9" stroke-width="1"/>
<path d="M851.4,488.7 C852.7,489.8 856.9,492.4 859.3,495.4 C861.7,498.4 863.4,502.9 866.1,506.7 C868.7,510.4 870.9,515.2 875.1,518.0 C879.2,520.7 885.2,522.8 890.8,523.1 C896.5,523.5 902.9,522.2 908.9,520.2 C914.9,518.2 920.9,515.0 926.9,511.2 C932.9,507.4 939.7,502.4 944.9,497.7 C950.2,493.0 954.7,487.7 958.5,483.0 C962.2,478.3 965.4,472.7 967.5,469.5 C969.5,466.3 970.3,464.8 970.8,463.9" stroke-width="3.8"/>
<path d="M1030.6,463.9 C1029.8,466.7 1028.3,474.6 1026.1,480.8 C1023.8,487.0 1020.8,494.7 1017.0,501.1 C1013.3,507.4 1008.4,513.6 1003.5,519.1 C998.6,524.5 993.4,529.4 987.7,533.7 C982.1,538.1 975.7,541.4 969.7,545.0 C963.7,548.6 957.7,552.3 951.7,555.1 C945.7,558.0 939.7,560.2 933.7,561.9 C927.7,563.6 921.6,564.7 915.6,565.3 C909.6,565.8 903.6,565.8 897.6,565.3 C891.6,564.7 885.2,563.6 879.6,561.9 C873.9,560.2 868.7,558.0 863.8,555.1 C858.9,552.3 854.0,548.8 850.3,545.0 C846.5,541.2 843.5,536.5 841.3,532.6 C839.0,528.7 837.3,525.1 836.8,521.3 C836.2,517.6 837.7,511.9 837.9,510.1" stroke-width="3.8"/>
<path d="M828.9,563.7 C830.6,562.1 835.4,556.4 839.0,554.0 C842.6,551.6 847.3,550.1 850.3,549.5 C853.3,548.9 855.9,550.4 857.0,550.6" stroke-width="3.8"/>
<path d="M969.7,546.1 C970.8,547.6 973.8,551.4 976.5,555.1 C979.1,558.9 982.1,564.5 985.5,568.7 C988.9,572.8 992.6,576.9 996.8,579.9 C1000.9,582.9 1005.4,585.6 1010.3,586.7 C1015.2,587.7 1020.8,587.2 1026.1,586.2 C1031.3,585.3 1036.9,583.2 1041.8,581.1 C1046.7,578.9 1051.6,574.9 1055.4,573.2 C1059.1,571.4 1061.7,570.6 1064.4,570.5 C1067.0,570.3 1070.0,572.0 1071.1,572.3" stroke-width="3.8"/>
<path d="M828.9,645.7 C830.6,644.5 836.0,641.6 839.0,638.5 C842.0,635.4 844.5,631.8 846.9,627.3 C849.3,622.7 851.2,616.4 853.7,611.5 C856.1,606.6 858.4,602.1 861.5,598.0 C864.7,593.8 868.3,589.5 872.8,586.7 C877.3,583.9 883.3,581.6 888.6,581.1 C893.8,580.5 899.5,581.6 904.4,583.3 C909.2,585.0 913.8,588.0 917.9,591.2 C922.0,594.4 925.8,598.0 929.2,602.5 C932.5,607.0 935.9,612.6 938.2,618.2 C940.4,623.9 941.9,630.3 942.7,636.3 C943.4,642.3 943.2,648.3 942.7,654.3 C942.1,660.3 940.8,667.4 939.3,672.3 C937.8,677.2 935.4,680.5 933.7,683.6 C931.9,686.7 929.5,689.6 928.7,690.8" stroke-width="3.8"/>
<path d="M1135.4,465.0 C1136.5,467.6 1139.7,474.8 1142.1,480.8 C1144.6,486.8 1147.6,494.3 1150.0,501.1 C1152.4,507.8 1155.1,514.6 1156.8,521.3 C1158.4,528.1 1159.4,534.9 1159.7,541.6 C1160.0,548.4 1159.1,555.5 1158.3,561.9 C1157.6,568.3 1156.1,575.3 1155.2,579.9 C1154.3,584.5 1153.3,587.8 1152.9,589.4" stroke-width="3.8"/>
<path d="M1161.3,465.0 C1162.6,468.0 1166.5,476.3 1169.2,483.0 C1171.8,489.8 1174.8,498.1 1177.0,505.6 C1179.3,513.1 1181.2,520.6 1182.7,528.1 C1184.2,535.6 1185.2,543.1 1186.1,550.6 C1186.9,558.1 1187.5,565.7 1187.6,573.2 C1187.7,580.7 1187.4,588.9 1186.7,595.7 C1186.1,602.5 1184.8,609.4 1183.8,613.7 C1182.8,618.1 1181.4,620.3 1180.9,621.6" stroke-width="3.8"/>
<path d="M1180.9,621.6 C1181.5,624.1 1183.5,630.4 1184.9,636.3 C1186.4,642.1 1188.0,649.8 1189.4,656.5 C1190.9,663.3 1192.4,671.2 1193.5,676.8 C1194.5,682.5 1195.4,688.1 1195.7,690.4" stroke-width="3.8"/>
<path d="M1070.0,570.9 C1071.1,571.6 1073.8,575.0 1076.8,575.0 C1079.8,574.9 1083.9,571.4 1088.0,570.5 C1092.2,569.5 1096.7,568.7 1101.5,569.1 C1106.4,569.5 1112.1,571.3 1117.3,572.7 C1122.6,574.1 1128.6,575.9 1133.1,577.7 C1137.6,579.4 1141.1,581.4 1144.4,583.3 C1147.7,585.3 1151.5,588.4 1152.9,589.4" stroke-width="3.8"/>
<path d="M1075.6,575.4 C1076.8,578.1 1080.3,585.6 1082.4,591.2 C1084.5,596.8 1086.7,602.8 1088.0,609.2 C1089.3,615.6 1090.0,622.7 1090.3,629.5 C1090.6,636.3 1090.3,644.7 1089.8,649.8 C1089.4,654.9 1088.5,655.8 1087.6,659.9 C1086.6,664.0 1085.4,669.7 1084.2,674.4 C1083.0,679.0 1080.8,685.4 1080.1,687.6" stroke-width="3.8"/>
<path d="M701.5,688.9 C701.7,690.6 701.5,695.8 702.7,699.0 C703.8,702.2 705.7,705.6 708.3,708.0 C710.9,710.5 714.5,712.1 718.5,713.7 C722.4,715.2 727.5,716.0 732.0,717.5 C736.5,719.0 741.0,720.3 745.5,722.7 C750.0,725.0 754.5,728.7 759.0,731.7 C763.5,734.7 768.0,738.1 772.5,740.7 C777.0,743.3 781.9,746.0 786.1,747.5 C790.2,749.0 793.2,749.9 797.3,749.7 C801.5,749.5 806.7,748.0 810.8,746.3 C815.0,744.6 818.8,742.0 822.1,739.6 C825.4,737.1 829.2,733.0 830.7,731.7" stroke-width="3.8"/>
<path d="M797.3,750.8 C795.8,751.8 790.8,754.2 788.3,756.5 C785.9,758.7 783.8,762.1 782.7,764.4 C781.5,766.6 781.7,769.1 781.5,770.0" stroke-width="3.8"/>
<path d="M782.7,770.0 C784.0,769.8 788.1,768.6 790.6,768.9 C793.0,769.1 795.8,770.5 797.3,771.6 C798.8,772.7 799.2,775.0 799.6,775.6" stroke-width="3.8"/>
<path d="M770.3,786.9 C771.8,786.3 776.1,784.1 779.3,783.5 C782.5,783.0 786.4,782.8 789.4,783.5 C792.4,784.3 795.2,786.3 797.3,788.0 C799.5,789.8 801.5,793.1 802.3,794.1" stroke-width="3.8"/>
<path d="M781.5,770.0 C780.2,771.5 775.7,775.8 773.7,779.0 C771.6,782.2 770.7,785.2 769.2,789.2 C767.7,793.1 765.2,798.5 764.6,802.7 C764.1,806.8 764.3,810.6 765.8,813.9 C767.3,817.3 770.3,820.7 773.7,823.0 C777.0,825.2 781.7,826.8 786.1,827.5 C790.4,828.1 795.1,827.7 799.6,827.0 C804.1,826.3 807.9,823.8 813.1,823.4 C818.3,823.0 827.7,824.5 830.7,824.8" stroke-width="3.8"/>
<path d="M798.5,749.7 C799.4,751.8 801.6,757.8 804.1,762.1 C806.5,766.4 810.1,771.7 813.1,775.6 C816.1,779.6 819.2,783.0 822.1,785.8 C825.0,788.6 829.2,791.4 830.7,792.5" stroke-width="3.8"/>
<path d="M828.9,737.3 C831.3,737.2 838.1,737.6 843.5,736.9 C849.0,736.1 855.5,734.6 861.5,732.8 C867.6,731.0 873.6,728.7 879.6,726.1 C885.6,723.4 892.0,720.4 897.6,717.0 C903.2,713.7 908.9,709.3 913.4,705.8 C917.9,702.2 921.8,698.4 924.6,695.6 C927.5,692.9 929.3,690.4 930.3,689.3" stroke-width="3.8"/>
<path d="M828.9,791.9 C831.3,793.5 838.5,798.9 843.5,801.5 C848.6,804.2 853.3,806.4 859.3,807.6 C865.3,808.9 872.4,809.1 879.6,809.0 C886.7,808.8 894.2,808.2 902.1,806.7 C910.0,805.3 917.2,803.7 926.9,800.4 C936.6,797.1 951.9,790.2 960.0,786.9 C968.1,783.6 970.2,782.8 975.6,780.4 C981.0,778.0 986.8,775.3 992.5,772.5 C998.1,769.7 1003.9,766.7 1009.4,763.5 C1014.8,760.2 1019.9,756.9 1025.2,753.1 C1030.4,749.3 1035.9,744.7 1040.7,740.7 C1045.5,736.7 1049.9,733.1 1053.8,729.0 C1057.7,724.9 1060.9,720.5 1064.1,715.9 C1067.4,711.4 1070.8,706.3 1073.4,701.7 C1076.0,697.2 1078.6,690.8 1079.7,688.6" stroke-width="3.8"/>
<path d="M828.9,824.8 C832.1,824.8 841.5,825.5 848.0,825.2 C854.6,824.9 861.9,823.7 868.3,823.0 C874.7,822.2 880.7,821.5 886.3,820.7 C892.0,820.0 899.5,818.8 902.1,818.5" stroke-width="3.8"/>
<path d="M902.1,812.8 C904.4,814.1 911.1,817.9 915.6,820.7 C920.1,823.5 923.9,826.7 929.2,829.7 C934.4,832.7 941.2,836.4 947.2,838.7 C953.2,841.1 958.5,842.6 965.2,843.7 C972.0,844.7 980.2,845.2 987.7,845.0 C995.3,844.9 1002.8,843.8 1010.3,842.8 C1017.8,841.7 1025.3,840.5 1032.8,838.7 C1040.3,836.9 1049.0,834.3 1055.4,832.0 C1061.7,829.6 1068.1,826.0 1070.7,824.8" stroke-width="3.8"/>
<path d="M902.1,818.5 C900.4,819.6 894.6,822.6 892.0,825.2 C889.3,827.8 887.5,830.8 886.3,834.2 C885.2,837.6 884.8,841.9 885.2,845.5 C885.6,849.1 887.1,852.8 888.6,855.6 C890.1,858.5 892.2,861.1 894.2,862.4 C896.3,863.7 899.9,863.3 901.0,863.5" stroke-width="3.8"/>
<path d="M922.4,829.7 C920.9,830.5 916.2,832.0 913.4,834.2 C910.6,836.5 907.2,839.9 905.5,843.2 C903.8,846.6 903.2,850.8 903.2,854.5 C903.2,858.3 904.4,863.0 905.5,865.8 C906.6,868.6 908.3,870.2 910.0,871.4 C911.7,872.6 914.7,872.7 915.6,873.0" stroke-width="3.8"/>
<path d="M942.7,851.1 C941.2,850.8 936.5,848.7 933.7,848.9 C930.8,849.1 928.0,850.6 925.8,852.3 C923.5,853.9 921.5,856.0 920.1,859.0 C918.8,862.0 917.9,866.5 917.9,870.3 C917.9,874.0 918.6,878.4 920.1,881.5 C921.6,884.7 924.3,887.9 926.9,889.4 C929.5,891.0 932.5,891.2 935.9,891.0 C939.3,890.8 943.4,889.9 947.2,888.3 C950.9,886.7 955.1,883.8 958.5,881.5 C961.8,879.3 966.0,875.9 967.5,874.8" stroke-width="3.8"/>
<path d="M967.5,874.8 C969.0,875.5 972.3,878.2 976.5,879.3 C980.6,880.4 986.6,881.4 992.3,881.5 C997.9,881.7 1003.5,881.2 1010.3,880.4 C1017.0,879.7 1025.3,878.2 1032.8,877.0 C1040.3,875.9 1049.0,874.4 1055.4,873.7 C1061.7,872.9 1068.1,872.7 1070.7,872.5" stroke-width="3.8"/>
<path d="M1195.7,690.0 C1195.9,693.0 1196.8,701.3 1196.6,708.0 C1196.5,714.8 1196.3,723.1 1195.1,730.6 C1193.9,738.1 1191.9,745.6 1189.4,753.1 C1187.0,760.6 1183.8,768.5 1180.4,775.6 C1177.0,782.8 1173.3,789.5 1169.2,795.9 C1165.0,802.3 1160.1,808.7 1155.6,813.9 C1151.1,819.2 1145.9,823.8 1142.1,827.5 C1138.4,831.1 1134.6,834.6 1133.1,836.0" stroke-width="3.8"/>
<path d="M1133.1,836.0 C1134.4,836.9 1138.8,838.7 1141.0,841.0 C1143.2,843.3 1145.2,847.0 1146.2,850.0 C1147.1,853.0 1147.7,856.2 1146.6,859.0 C1145.6,861.8 1142.9,864.8 1139.9,866.9 C1136.9,869.0 1132.7,870.3 1128.6,871.4 C1124.5,872.5 1120.3,873.3 1115.1,873.7 C1109.8,874.0 1102.3,873.8 1097.0,873.7 C1091.8,873.5 1088.1,873.2 1083.5,873.0 C1078.9,872.7 1071.7,872.2 1069.3,872.1" stroke-width="3.8"/>
<path d="M1069.3,824.8 C1070.6,824.5 1074.8,822.6 1076.8,823.0 C1078.7,823.3 1080.1,826.3 1080.8,827.0" stroke-width="3.8"/>
<path d="M1077.9,820.7 L1072.3,824.8" stroke-width="2"/>
</svg>

</div>
<div class="edge"></div>
</div>
</body>
</html>
